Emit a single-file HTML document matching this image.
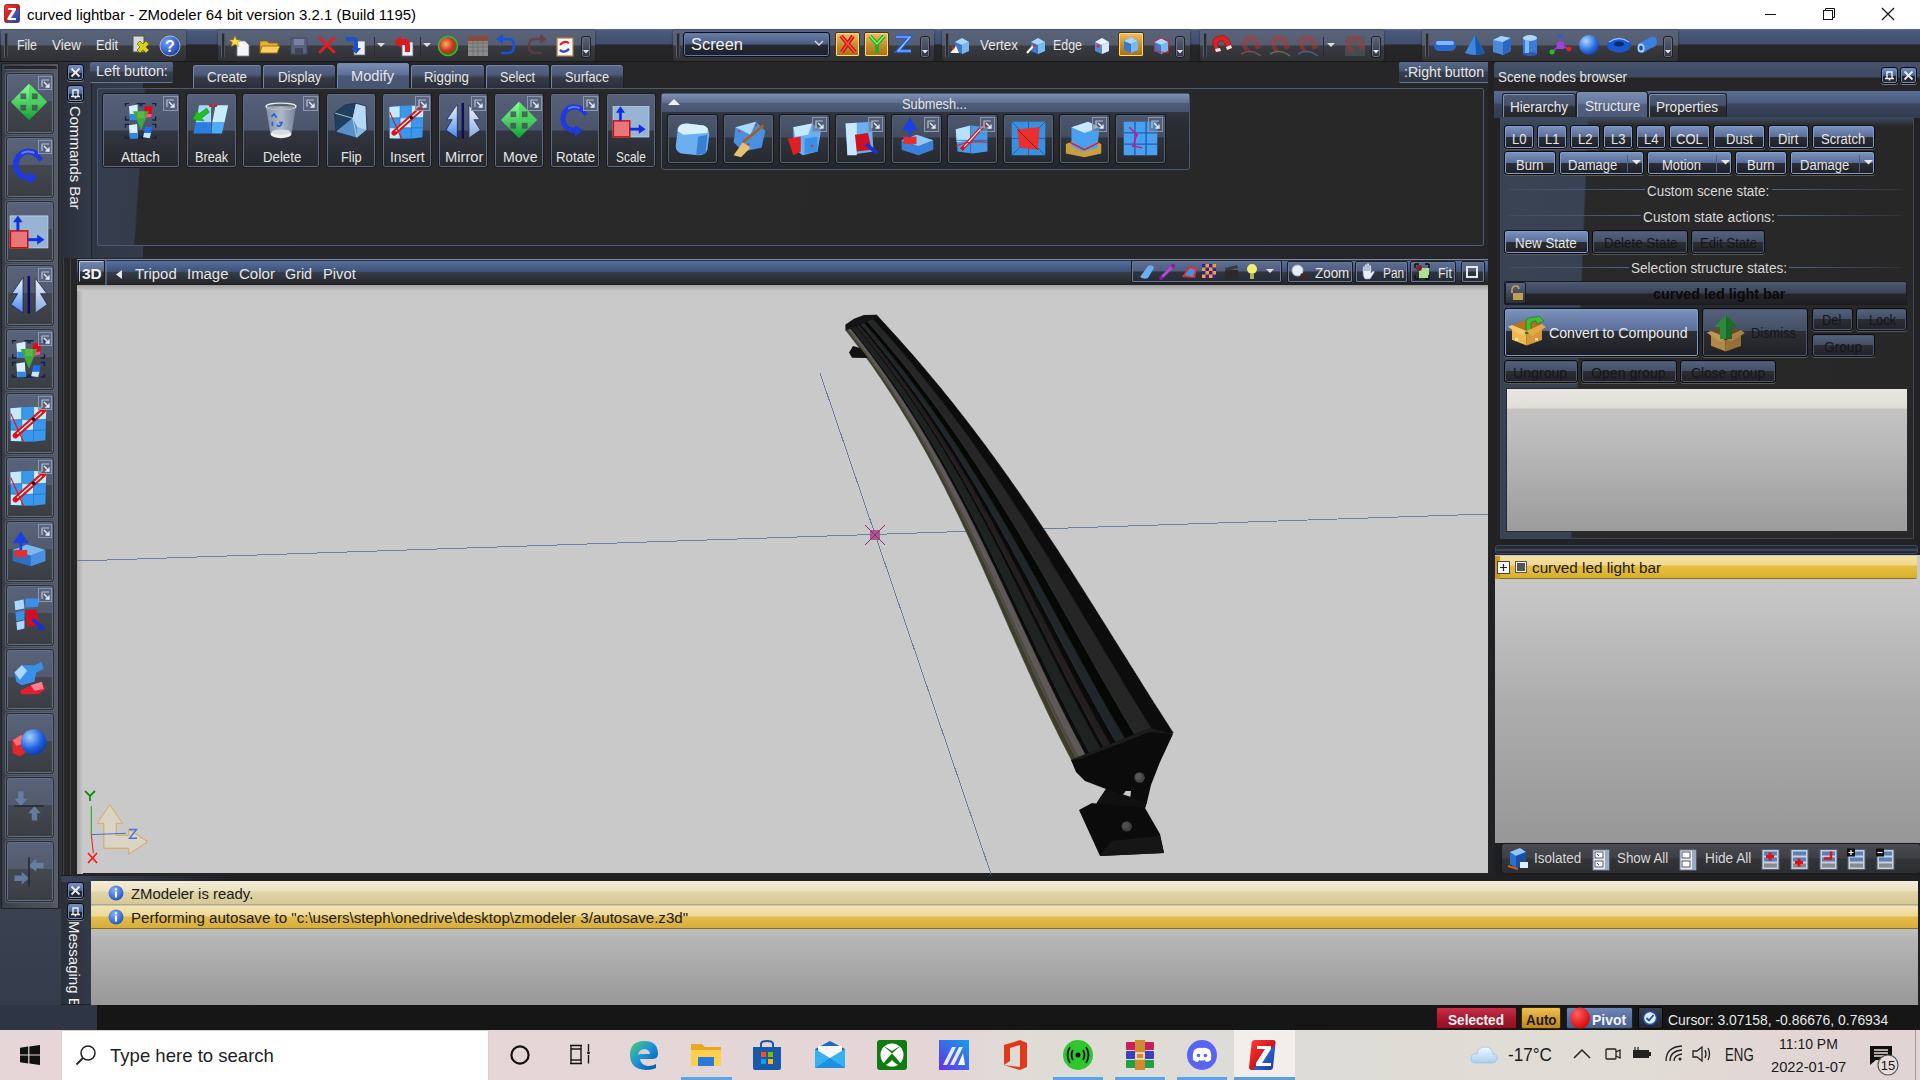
<!DOCTYPE html>
<html><head><meta charset="utf-8"><title>ZModeler</title><style>*{margin:0;padding:0;box-sizing:border-box}
html,body{width:1920px;height:1080px;overflow:hidden;background:#262627;font-family:"Liberation Sans",sans-serif}
.a{position:absolute;display:block}
.t{position:absolute;white-space:nowrap;transform-origin:0 0;font-family:"Liberation Sans",sans-serif}
svg.a{overflow:visible}</style></head><body>
<div class="a" style="left:0px;top:0px;width:1920px;height:29px;background:#fff"></div>
<svg class="a" style="left:4px;top:4px;" width="16" height="19" viewBox="0 0 16 19"><defs><linearGradient id="zg" x1="0" y1="0" x2="1" y2="1"><stop offset="0" stop-color="#ff3a3a"/><stop offset="0.55" stop-color="#d01515"/><stop offset="0.6" stop-color="#2a5fd0"/><stop offset="1" stop-color="#1a3a9a"/></linearGradient></defs><rect x="0.5" y="0.5" width="15" height="18" rx="2" fill="url(#zg)" stroke="#8a1010" stroke-width="0.8"/><path d="M4 4 H12 V6 L7 14 H12 V16 H3.5 V14 L8.5 6 H4 Z" fill="#fff"/></svg>
<div class="t" style="left:27.00px;top:7.30px;font-size:15px;line-height:15px;color:#000;transform:scaleX(0.9977);">curved lightbar - ZModeler 64 bit version 3.2.1 (Build 1195)</div>
<div class="a" style="left:1765px;top:14px;width:11px;height:1px;background:#111"></div>
<svg class="a" style="left:1822px;top:7px;" width="14" height="14" viewBox="0 0 14 14"><rect x="1.5" y="3.5" width="9" height="9" fill="none" stroke="#111"/><path d="M3.5 3.5 V1.5 H12.5 V10.5 H10.5" fill="none" stroke="#111"/></svg>
<svg class="a" style="left:1881px;top:7px;" width="14" height="14" viewBox="0 0 14 14"><path d="M1 1 L13 13 M13 1 L1 13" stroke="#111" stroke-width="1.2"/></svg>
<div class="a" style="left:0px;top:29px;width:1920px;height:33px;background:linear-gradient(#5a6b8e 0px,#4a5a7c 2px,#3f4e6c 15px,#262729 16px,#242426 33px)"></div>
<div class="a" style="left:0px;top:61px;width:1920px;height:1px;background:#1a1a1b"></div>
<div class="a" style="left:1px;top:30px;width:185px;height:31px;border-radius:2px;background:linear-gradient(#5a6478 0px,#535c70 15px,#3a3b40 16px,#303135 31px);box-shadow:0 0 2px #1e1e20"></div>
<div class="a" style="left:4px;top:33px;width:4px;height:25px;border-radius:2px;background:#262a32;border-left:1px solid #5a6070;border-right:1px solid #4a5060"></div>
<div class="a" style="left:218px;top:30px;width:377px;height:31px;border-radius:2px;background:linear-gradient(#5a6478 0px,#535c70 15px,#3a3b40 16px,#303135 31px);box-shadow:0 0 2px #1e1e20"></div>
<div class="a" style="left:221px;top:33px;width:4px;height:25px;border-radius:2px;background:#262a32;border-left:1px solid #5a6070;border-right:1px solid #4a5060"></div>
<div class="a" style="left:673px;top:30px;width:261px;height:31px;border-radius:2px;background:linear-gradient(#5a6478 0px,#535c70 15px,#3a3b40 16px,#303135 31px);box-shadow:0 0 2px #1e1e20"></div>
<div class="a" style="left:676px;top:33px;width:4px;height:25px;border-radius:2px;background:#262a32;border-left:1px solid #5a6070;border-right:1px solid #4a5060"></div>
<div class="a" style="left:942px;top:30px;width:248px;height:31px;border-radius:2px;background:linear-gradient(#5a6478 0px,#535c70 15px,#3a3b40 16px,#303135 31px);box-shadow:0 0 2px #1e1e20"></div>
<div class="a" style="left:945px;top:33px;width:4px;height:25px;border-radius:2px;background:#262a32;border-left:1px solid #5a6070;border-right:1px solid #4a5060"></div>
<div class="a" style="left:1200px;top:30px;width:184px;height:31px;border-radius:2px;background:linear-gradient(#5a6478 0px,#535c70 15px,#3a3b40 16px,#303135 31px);box-shadow:0 0 2px #1e1e20"></div>
<div class="a" style="left:1203px;top:33px;width:4px;height:25px;border-radius:2px;background:#262a32;border-left:1px solid #5a6070;border-right:1px solid #4a5060"></div>
<div class="a" style="left:1422px;top:30px;width:256px;height:31px;border-radius:2px;background:linear-gradient(#5a6478 0px,#535c70 15px,#3a3b40 16px,#303135 31px);box-shadow:0 0 2px #1e1e20"></div>
<div class="a" style="left:1425px;top:33px;width:4px;height:25px;border-radius:2px;background:#262a32;border-left:1px solid #5a6070;border-right:1px solid #4a5060"></div>
<div class="t" style="left:17.00px;top:38.15px;font-size:14px;line-height:14px;color:#e6e6e6;transform:scaleX(0.8850);">File</div>
<div class="t" style="left:52.00px;top:38.15px;font-size:14px;line-height:14px;color:#e6e6e6;transform:scaleX(0.9603);">View</div>
<div class="t" style="left:96.00px;top:38.15px;font-size:14px;line-height:14px;color:#e6e6e6;transform:scaleX(0.9129);">Edit</div>
<svg class="a" style="left:131px;top:34px;" width="22" height="22" viewBox="0 0 22 22"><rect x="2" y="2" width="11" height="16" fill="#d8d8d8" stroke="#555"/><path d="M6 10 l3 -3 l3 3 l3 -3 l3 3 l-3 3 l3 3 l-3 3 l-3 -3 l-3 3 l-3 -3 l3 -3z" fill="#d6d020" stroke="#6a6a00" stroke-width="0.8"/></svg>
<svg class="a" style="left:159px;top:35px;" width="22" height="21" viewBox="0 0 22 21"><defs><radialGradient id="hq" cx="0.35" cy="0.3" r="0.8"><stop offset="0" stop-color="#6aa0ff"/><stop offset="1" stop-color="#1a3aa0"/></radialGradient></defs><circle cx="11" cy="11" r="10" fill="url(#hq)" stroke="#c8d0e0" stroke-width="0.8"/><text x="11" y="17" font-size="16" font-weight="bold" text-anchor="middle" fill="#fff" font-family="Liberation Sans">?</text></svg>
<svg class="a" style="left:230px;top:35px;" width="22" height="22" viewBox="0 0 22 22"><path d="M7 6 H15 L19 10 V21 H7Z" fill="#f4f4f4" stroke="#7a8090" stroke-width="0.8"/><path d="M5 1 l1.5 4 4 0 -3 2.5 1 4 -3.5 -2.5 -3.5 2.5 1 -4 -3 -2.5 4 0z" fill="#ffe040" stroke="#c09000" stroke-width="0.5"/></svg>
<svg class="a" style="left:259px;top:37px;" width="22" height="18" viewBox="0 0 22 18"><path d="M1 4 H8 L10 6 H19 V16 H1Z" fill="#e8b030" stroke="#8a6010" stroke-width="0.8"/><path d="M3 9 H21 L18 16 H1Z" fill="#ffd060" stroke="#8a6010" stroke-width="0.8"/></svg>
<svg class="a" style="left:289px;top:36px;" width="20" height="20" viewBox="0 0 20 20"><rect x="2" y="2" width="16" height="16" rx="1" fill="#5a6080" stroke="#454a60"/><rect x="5" y="3" width="10" height="6" fill="#7a80a0"/><rect x="6" y="12" width="8" height="6" fill="#40455a"/></svg>
<svg class="a" style="left:317px;top:35px;" width="20" height="20" viewBox="0 0 20 20"><path d="M3 3 L17 17 M17 3 L3 17" stroke="#e02020" stroke-width="3" stroke-linecap="round"/></svg>
<svg class="a" style="left:345px;top:35px;" width="22" height="22" viewBox="0 0 22 22"><rect x="9" y="6" width="11" height="14" fill="#eef" stroke="#666" stroke-width="0.8"/><path d="M1 2 H10 L13 5 V13 H16 L11 19 L6 13 H9 V6 H1Z" fill="#1a50d0"/></svg>
<div class="a" style="left:374px;top:37px;width:1px;height:20px;background:#2a2c30"></div>
<svg class="a" style="left:377px;top:43px;" width="8" height="5" viewBox="0 0 8 5"><path d="M0 0 H8 L4 4Z" fill="#e0e0e0"/></svg>
<svg class="a" style="left:393px;top:35px;" width="22" height="22" viewBox="0 0 22 22"><rect x="9" y="7" width="11" height="14" fill="#eef" stroke="#666" stroke-width="0.8"/><path d="M1 7 L8 1 V4 H12 Q17 4 17 10 V17 H12 V10 H8 V13Z" fill="#e01818"/></svg>
<div class="a" style="left:420px;top:37px;width:1px;height:20px;background:#2a2c30"></div>
<svg class="a" style="left:423px;top:43px;" width="8" height="5" viewBox="0 0 8 5"><path d="M0 0 H8 L4 4Z" fill="#e0e0e0"/></svg>
<svg class="a" style="left:437px;top:35px;" width="22" height="22" viewBox="0 0 22 22"><defs><radialGradient id="gb" cx="0.4" cy="0.4" r="0.7"><stop offset="0" stop-color="#ffb060"/><stop offset="0.5" stop-color="#d03020"/><stop offset="1" stop-color="#108010"/></radialGradient></defs><circle cx="11" cy="11" r="10" fill="url(#gb)"/><circle cx="11" cy="11" r="9.5" fill="none" stroke="#30c030" stroke-width="1.5"/></svg>
<svg class="a" style="left:467px;top:35px;" width="22" height="22" viewBox="0 0 22 22"><rect x="1" y="1" width="20" height="20" fill="#8a8a8a"/><path d="M1 1 H21 V6 H1Z" fill="#8a4a3a"/><path d="M1 8 H21 M1 12 H21 M1 16 H21 M6 6 V21 M11 6 V21 M16 6 V21" stroke="#6a6a6a" stroke-width="0.8"/></svg>
<svg class="a" style="left:495px;top:36px;" width="22" height="20" viewBox="0 0 22 20"><path d="M8 3 H13 Q19 3 19 10 Q19 17 13 17 H6" fill="none" stroke="#1a50e0" stroke-width="2.5"/><path d="M1 3 L8 -2 V8Z" fill="#1a50e0"/></svg>
<svg class="a" style="left:526px;top:36px;" width="22" height="20" viewBox="0 0 22 20"><path d="M14 3 H9 Q3 3 3 10 Q3 17 9 17 H16" fill="none" stroke="#6a3a40" stroke-width="2.5" opacity="0.8"/><path d="M21 3 L14 -2 V8Z" fill="#6a3a40" opacity="0.8"/></svg>
<svg class="a" style="left:554px;top:35px;" width="22" height="22" viewBox="0 0 22 22"><rect x="3" y="3" width="16" height="18" fill="#f8f8f8" stroke="#b08040" stroke-width="1.2"/><path d="M6 10 Q10 5 15 8 M15 8 l-3 -1 M6 15 Q10 19 15 14" stroke="#e02020" stroke-width="2" fill="none"/><path d="M6 15 Q10 19 15 14" stroke="#2050e0" stroke-width="2" fill="none"/></svg>
<div class="a" style="left:581px;top:36px;width:10px;height:22px;border:1px solid #1d1f24;border-radius:3px;background:linear-gradient(#5a6478,#2e3340);box-shadow:inset 0 0 0 1px #6a7080"></div>
<svg class="a" style="left:583px;top:50px;" width="6" height="4" viewBox="0 0 6 4"><path d="M0 0 H6 L3 3.5Z" fill="#e8e8e8"/></svg>
<div class="a" style="left:683px;top:32px;width:147px;height:25px;border:1px solid #0e0f12;border-radius:3px;background:linear-gradient(#6a7ea8,#4b5c82 11px,#262a34 12px,#1d1f25);box-shadow:inset 0 0 0 1px #5a7ab0"></div>
<div class="t" style="left:691.00px;top:35.61px;font-size:17px;line-height:17px;color:#f2f2f2;transform:scaleX(0.9647);">Screen</div>
<svg class="a" style="left:814px;top:40px;" width="10" height="7" viewBox="0 0 10 7"><path d="M1 1 L5 5 L9 1" fill="none" stroke="#e0e0e0" stroke-width="1.3"/></svg>
<div class="a" style="left:835px;top:32px;width:25px;height:25px;border:1px solid #4a3510;border-radius:2px;background:linear-gradient(#f0c060,#c89030 50%,#a87010);box-shadow:inset 0 0 0 1px #ffd890"></div>
<svg class="a" style="left:838px;top:34px;" width="20" height="20" viewBox="0 0 20 20"><path d="M3 2 L17 18 M15 2 L4 18" stroke="#d01010" stroke-width="4"/><path d="M3 2 L17 18 M15 2 L4 18" stroke="#ff6060" stroke-width="1.2"/></svg>
<div class="a" style="left:864px;top:32px;width:25px;height:25px;border:1px solid #4a3510;border-radius:2px;background:linear-gradient(#f0c060,#c89030 50%,#a87010);box-shadow:inset 0 0 0 1px #ffd890"></div>
<svg class="a" style="left:867px;top:34px;" width="20" height="20" viewBox="0 0 20 20"><path d="M3 2 L10 10 L17 2 M10 10 V19" fill="none" stroke="#20b020" stroke-width="4"/><path d="M3 2 L10 10 L17 2" fill="none" stroke="#80ff80" stroke-width="1.2"/></svg>
<svg class="a" style="left:893px;top:34px;" width="20" height="20" viewBox="0 0 20 20"><path d="M3 3 H17 L5 17 H18" fill="none" stroke="#2060e0" stroke-width="4"/><path d="M3 3 H17 L5 17 H18" fill="none" stroke="#a0c8ff" stroke-width="1.2"/></svg>
<div class="a" style="left:920px;top:36px;width:10px;height:22px;border:1px solid #1d1f24;border-radius:3px;background:linear-gradient(#5a6478,#2e3340);box-shadow:inset 0 0 0 1px #6a7080"></div>
<svg class="a" style="left:922px;top:50px;" width="6" height="4" viewBox="0 0 6 4"><path d="M0 0 H6 L3 3.5Z" fill="#e8e8e8"/></svg>
<svg class="a" style="left:952px;top:35px;" width="20" height="20" viewBox="0 0 20 20"><path d="M3 7 L10 3 L17 7 L17 16 L10 19 L3 16Z" fill="#3a78c8"/><path d="M3 7 L10 3 L17 7 L10 10Z" fill="#a8d8ff"/><path d="M10 10 L17 7 V16 L10 19Z" fill="#7ab8f0"/></svg>
<svg class="a" style="left:950px;top:44px;" width="10" height="10" viewBox="0 0 10 10"><path d="M0 9 L6 2 L9 9Z" fill="#fff"/><circle cx="3" cy="4" r="1.5" fill="#e02020"/></svg>
<div class="t" style="left:980.00px;top:38.15px;font-size:14px;line-height:14px;color:#e6e6e6;transform:scaleX(0.9572);">Vertex</div>
<svg class="a" style="left:1028px;top:35px;" width="20" height="20" viewBox="0 0 20 20"><path d="M3 7 L10 3 L17 7 L17 16 L10 19 L3 16Z" fill="#3a78c8"/><path d="M3 7 L10 3 L17 7 L10 10Z" fill="#a8d8ff"/><path d="M10 10 L17 7 V16 L10 19Z" fill="#7ab8f0"/></svg>
<svg class="a" style="left:1026px;top:44px;" width="10" height="10" viewBox="0 0 10 10"><path d="M1 9 L8 1" stroke="#fff" stroke-width="2"/><circle cx="8" cy="1.5" r="1.5" fill="#e02020"/></svg>
<div class="t" style="left:1053.00px;top:38.15px;font-size:14px;line-height:14px;color:#e6e6e6;transform:scaleX(0.8869);">Edge</div>
<svg class="a" style="left:1092px;top:35px;" width="20" height="20" viewBox="0 0 20 20"><path d="M3 7 L10 3 L17 7 L17 16 L10 19 L3 16Z" fill="#5a88c8"/><path d="M3 7 L10 3 L17 7 L10 10Z" fill="#f0f0ff"/><path d="M10 10 L17 7 V16 L10 19Z" fill="#d8e8f8"/></svg>
<svg class="a" style="left:1094px;top:42px;" width="8" height="8" viewBox="0 0 8 8"><circle cx="4" cy="4" r="1.5" fill="#e02020"/></svg>
<div class="a" style="left:1118px;top:32px;width:26px;height:25px;border:1px solid #4a3510;border-radius:2px;background:linear-gradient(#f0c060,#c89030 50%,#a87010);box-shadow:inset 0 0 0 1px #ffd890"></div>
<svg class="a" style="left:1121px;top:34px;" width="21" height="21" viewBox="0 0 21 21"><path d="M3 7 L10 3 L17 7 L17 16 L10 19 L3 16Z" fill="#3a78c8"/><path d="M3 7 L10 3 L17 7 L10 10Z" fill="#a8d8ff"/><path d="M10 10 L17 7 V16 L10 19Z" fill="#7ab8f0"/></svg>
<svg class="a" style="left:1151px;top:35px;" width="22" height="22" viewBox="0 0 22 22"><path d="M3 7 L10 3 L17 7 L17 16 L10 19 L3 16Z" fill="#3a78c8"/><path d="M3 7 L10 3 L17 7 L10 10Z" fill="#a8d8ff"/><path d="M10 10 L17 7 V16 L10 19Z" fill="#7ab8f0"/></svg>
<svg class="a" style="left:1151px;top:35px;" width="22" height="22" viewBox="0 0 22 22"><path d="M3 7 L10 3 L19 7 L17 18 L4 16Z" fill="none" stroke="#e02020" stroke-width="1"/></svg>
<div class="a" style="left:1175px;top:36px;width:10px;height:22px;border:1px solid #1d1f24;border-radius:3px;background:linear-gradient(#5a6478,#2e3340);box-shadow:inset 0 0 0 1px #6a7080"></div>
<svg class="a" style="left:1177px;top:50px;" width="6" height="4" viewBox="0 0 6 4"><path d="M0 0 H6 L3 3.5Z" fill="#e8e8e8"/></svg>
<svg class="a" style="left:1210px;top:34px;" width="24" height="24" viewBox="0 0 24 24"><path d="M6 18 L3 11 Q1 4 9 2 Q17 0 20 8 L22 14 L17 16 L15 10 Q14 6 10 7 Q6 8 8 12 L11 17Z" fill="#e02020" stroke="#801010" stroke-width="0.6"/><path d="M6 18 L11 17 L10 14 L5 15Z M22 14 L17 16 L16 13 L21 11Z" fill="#e8e8e8"/></svg>
<svg class="a" style="left:1239px;top:34px;" width="24" height="24" viewBox="0 0 24 24"><g opacity="0.45"><path d="M6 18 L3 11 Q1 4 9 2 Q17 0 20 8 L22 14 L17 16 L15 10 Q14 6 10 7 Q6 8 8 12 L11 17Z" fill="#c03030"/></g><path d="M2 20 Q12 14 22 22" stroke="#7a5050" stroke-width="1.5" fill="none"/></svg>
<svg class="a" style="left:1268px;top:34px;" width="24" height="24" viewBox="0 0 24 24"><g opacity="0.45"><path d="M6 18 L3 11 Q1 4 9 2 Q17 0 20 8 L22 14 L17 16 L15 10 Q14 6 10 7 Q6 8 8 12 L11 17Z" fill="#c03030"/></g><path d="M2 20 Q12 14 22 22" stroke="#607050" stroke-width="1.5" fill="none"/></svg>
<svg class="a" style="left:1296px;top:34px;" width="24" height="24" viewBox="0 0 24 24"><g opacity="0.45"><path d="M6 18 L3 11 Q1 4 9 2 Q17 0 20 8 L22 14 L17 16 L15 10 Q14 6 10 7 Q6 8 8 12 L11 17Z" fill="#c03030"/></g><path d="M2 20 Q12 14 22 22" stroke="#506080" stroke-width="1.5" fill="none"/></svg>
<div class="a" style="left:1323px;top:37px;width:1px;height:20px;background:#2a2c30"></div>
<svg class="a" style="left:1327px;top:43px;" width="8" height="5" viewBox="0 0 8 5"><path d="M0 0 H8 L4 4Z" fill="#e0e0e0"/></svg>
<svg class="a" style="left:1343px;top:34px;" width="24" height="24" viewBox="0 0 24 24"><rect x="2" y="2" width="20" height="20" fill="#55575c" opacity="0.6"/><g opacity="0.4"><path d="M6 18 L3 11 Q1 4 9 2 Q17 0 20 8 L22 14 L17 16 L15 10 Q14 6 10 7 Q6 8 8 12 L11 17Z" fill="#c03030"/></g></svg>
<div class="a" style="left:1371px;top:36px;width:10px;height:22px;border:1px solid #1d1f24;border-radius:3px;background:linear-gradient(#5a6478,#2e3340);box-shadow:inset 0 0 0 1px #6a7080"></div>
<svg class="a" style="left:1373px;top:50px;" width="6" height="4" viewBox="0 0 6 4"><path d="M0 0 H6 L3 3.5Z" fill="#e8e8e8"/></svg>
<svg class="a" style="left:1433px;top:37px;" width="24" height="16" viewBox="0 0 24 16"><rect x="1" y="3" width="22" height="11" rx="5.5" fill="#2a68d0"/><rect x="3" y="4" width="18" height="4" rx="2" fill="#80b8ff"/></svg>
<svg class="a" style="left:1464px;top:34px;" width="22" height="22" viewBox="0 0 22 22"><path d="M11 1 L21 19 Q11 23 1 19Z" fill="#3a88e0"/><path d="M11 1 L21 19 Q16 21 12 21Z" fill="#1a58b0"/></svg>
<svg class="a" style="left:1491px;top:34px;" width="22" height="22" viewBox="0 0 22 22"><path d="M2 6 L10 2 L20 4 L20 17 L12 21 L2 18Z" fill="#4a8ad8"/><path d="M2 6 L10 2 L20 4 L12 8Z" fill="#a8d0ff"/><path d="M12 8 L20 4 V17 L12 21Z" fill="#2a68c0"/></svg>
<svg class="a" style="left:1520px;top:34px;" width="20" height="22" viewBox="0 0 20 22"><rect x="3" y="4" width="14" height="16" fill="#3a7ad8"/><ellipse cx="10" cy="4" rx="7" ry="3" fill="#b0d8ff"/><ellipse cx="10" cy="20" rx="7" ry="2" fill="#2a5ab0"/><rect x="5" y="6" width="4" height="13" fill="#80b8ff"/></svg>
<svg class="a" style="left:1549px;top:34px;" width="22" height="22" viewBox="0 0 22 22"><path d="M11 11 V2 M11 11 L3 18 M11 11 L20 15" stroke="#8a40c0" stroke-width="2"/><rect x="8" y="8" width="7" height="7" fill="#a040e0"/><circle cx="11" cy="2" r="2" fill="#2060e0"/><circle cx="3" cy="18" r="2.5" fill="#20c020"/><circle cx="20" cy="15" r="2.5" fill="#e02020"/></svg>
<svg class="a" style="left:1578px;top:34px;" width="22" height="22" viewBox="0 0 22 22"><defs><radialGradient id="sph" cx="0.35" cy="0.3" r="0.8"><stop offset="0" stop-color="#b0d8ff"/><stop offset="0.6" stop-color="#2a70e0"/><stop offset="1" stop-color="#1a30a0"/></radialGradient></defs><circle cx="11" cy="11" r="10" fill="url(#sph)"/></svg>
<svg class="a" style="left:1606px;top:36px;" width="26" height="18" viewBox="0 0 26 18"><ellipse cx="13" cy="9" rx="12" ry="7.5" fill="#1a58d0"/><ellipse cx="13" cy="8" rx="5" ry="2.5" fill="#0a2a70"/><path d="M3 6 Q13 -1 23 6" stroke="#90c0ff" stroke-width="1.5" fill="none"/></svg>
<svg class="a" style="left:1635px;top:34px;" width="24" height="22" viewBox="0 0 24 22"><path d="M3 10 L16 3 Q22 2 22 8 Q22 13 16 14 L8 19 Q3 19 3 14Z" fill="#3a80e0"/><ellipse cx="6" cy="14" rx="3.5" ry="4.5" fill="#a8d0ff"/><ellipse cx="6" cy="14" rx="1.8" ry="2.5" fill="#1a50a0"/></svg>
<div class="a" style="left:1663px;top:36px;width:10px;height:22px;border:1px solid #1d1f24;border-radius:3px;background:linear-gradient(#5a6478,#2e3340);box-shadow:inset 0 0 0 1px #6a7080"></div>
<svg class="a" style="left:1665px;top:50px;" width="6" height="4" viewBox="0 0 6 4"><path d="M0 0 H6 L3 3.5Z" fill="#e8e8e8"/></svg>
<div class="a" style="left:0px;top:62px;width:62px;height:848px;background:#2c3039"></div>
<div class="a" style="left:1px;top:63px;width:58px;height:846px;background:linear-gradient(90deg,#3a3e46,#474b54 40%,#4c5059 85%,#5a5e68);border:1px solid #1f2228;border-radius:2px"></div>
<div class="a" style="left:4px;top:66px;width:53px;height:4px;background:#23262c;border-bottom:1px solid #5a6070;border-radius:2px"></div>
<div class="a" style="left:6px;top:73px;width:48px;height:61px;border:1px solid #2a2d33; border-radius:3px;background:linear-gradient(#5a6378,#525a6c 27px,#43474f 27px,#3a3d44);box-shadow:inset 0 0 0 1px #5e6e8e,0 0 0 1px #5c6069"></div>
<svg class="a" style="left:8px;top:81px;" width="42" height="42" viewBox="0 0 44 44"><defs><linearGradient id="mv" x1="0" y1="0" x2="0" y2="1"><stop offset="0" stop-color="#90ffa0"/><stop offset="1" stop-color="#10a030"/></linearGradient></defs><path d="M22 3 L41 22 L22 41 L3 22Z" fill="url(#mv)"/><path d="M22 3 L41 22 L22 22Z" fill="#40d050" opacity="0.6"/><rect x="13" y="13" width="6" height="6" fill="#3a4050" opacity="0.7"/><rect x="25" y="13" width="6" height="6" fill="#3a4050" opacity="0.7"/><rect x="13" y="25" width="6" height="6" fill="#3a4050" opacity="0.7"/><rect x="25" y="25" width="6" height="6" fill="#3a4050" opacity="0.7"/></svg>
<svg class="a" style="left:38px;top:76px;" width="14" height="14" viewBox="0 0 14 14"><rect x="0.5" y="0.5" width="13" height="13" fill="#5a6580" fill-opacity="0.5" stroke="#8a96b0"/><path d="M4 11 V4 H11" fill="none" stroke="#b8c2d8" stroke-width="1.2"/><path d="M6 6 L11 11 M11 7.5 V11 H7.5" fill="none" stroke="#e8eef8" stroke-width="1.3"/></svg>
<div class="a" style="left:6px;top:137px;width:48px;height:61px;border:1px solid #2a2d33; border-radius:3px;background:linear-gradient(#5a6378,#525a6c 27px,#43474f 27px,#3a3d44);box-shadow:inset 0 0 0 1px #5e6e8e,0 0 0 1px #5c6069"></div>
<svg class="a" style="left:8px;top:145px;" width="42" height="42" viewBox="0 0 44 44"><path d="M30 10 Q22 4 14 9 Q6 15 9 26 Q13 35 24 34" fill="none" stroke="#2038e0" stroke-width="6"/><path d="M30 10 Q22 4 14 9" fill="none" stroke="#6080ff" stroke-width="2"/><path d="M22 28 L31 34 L22 41Z" fill="#2038e0"/><path d="M28 8 L35 16" stroke="#2038e0" stroke-width="5"/></svg>
<svg class="a" style="left:38px;top:140px;" width="14" height="14" viewBox="0 0 14 14"><rect x="0.5" y="0.5" width="13" height="13" fill="#5a6580" fill-opacity="0.5" stroke="#8a96b0"/><path d="M4 11 V4 H11" fill="none" stroke="#b8c2d8" stroke-width="1.2"/><path d="M6 6 L11 11 M11 7.5 V11 H7.5" fill="none" stroke="#e8eef8" stroke-width="1.3"/></svg>
<div class="a" style="left:6px;top:201px;width:48px;height:61px;border:1px solid #2a2d33; border-radius:3px;background:linear-gradient(#5a6378,#525a6c 27px,#43474f 27px,#3a3d44);box-shadow:inset 0 0 0 1px #5e6e8e,0 0 0 1px #5c6069"></div>
<svg class="a" style="left:9px;top:210px;" width="40" height="40" viewBox="0 0 44 44"><rect x="1.2" y="6.5" width="41.6" height="35.2" fill="#98b4d4" stroke="#c8dcf0" stroke-width="0.8"/><rect x="1.6" y="23" width="19" height="18.5" fill="#e87878" stroke="#d00808" stroke-width="1.6"/><path d="M9.8 23 V12" stroke="#1030e0" stroke-width="3.2"/><path d="M4.5 13.5 L9.8 6 L15 13.5Z" fill="#1030e0"/><path d="M20.5 32.6 H33" stroke="#1030e0" stroke-width="3.2"/><path d="M31 27 L39 32.6 L31 38Z" fill="#1030e0"/></svg>
<div class="a" style="left:6px;top:265px;width:48px;height:61px;border:1px solid #2a2d33; border-radius:3px;background:linear-gradient(#5a6378,#525a6c 27px,#43474f 27px,#3a3d44);box-shadow:inset 0 0 0 1px #5e6e8e,0 0 0 1px #5c6069"></div>
<svg class="a" style="left:9px;top:274px;" width="40" height="40" viewBox="0 0 44 44"><defs><linearGradient id="mrl" x1="0" y1="0" x2="0" y2="1"><stop offset="0" stop-color="#eef8ff"/><stop offset="1" stop-color="#4a88f0"/></linearGradient><linearGradient id="mrr" x1="0" y1="0" x2="0" y2="1"><stop offset="0" stop-color="#f0f4ff"/><stop offset="1" stop-color="#8aa8e0"/></linearGradient></defs><path d="M15.4 3.9 L3.1 21.6 L9.5 21.6 L2.3 33.6 L15.4 42.8Z" fill="url(#mrl)" stroke="#102050" stroke-width="0.8"/><path d="M28.9 4.6 L41.7 21.6 L34.7 21.6 L42 33.6 L28.9 42.8Z" fill="url(#mrr)" stroke="#202a50" stroke-width="0.8"/><rect x="20.4" y="2.3" width="2.8" height="41.3" fill="#0a0e60"/></svg>
<svg class="a" style="left:38px;top:268px;" width="14" height="14" viewBox="0 0 14 14"><rect x="0.5" y="0.5" width="13" height="13" fill="#5a6580" fill-opacity="0.5" stroke="#8a96b0"/><path d="M4 11 V4 H11" fill="none" stroke="#b8c2d8" stroke-width="1.2"/><path d="M6 6 L11 11 M11 7.5 V11 H7.5" fill="none" stroke="#e8eef8" stroke-width="1.3"/></svg>
<div class="a" style="left:6px;top:329px;width:48px;height:61px;border:1px solid #2a2d33; border-radius:3px;background:linear-gradient(#5a6378,#525a6c 27px,#43474f 27px,#3a3d44);box-shadow:inset 0 0 0 1px #5e6e8e,0 0 0 1px #5c6069"></div>
<svg class="a" style="left:9px;top:338px;" width="40" height="40" viewBox="0 0 44 44"><g stroke="#10204a" stroke-width="1.6" fill="none"><path d="M4 6 V3 H8 M17 3 H21 V6 M23 6 V3 H27 M35 3 H39 V6 M4 18 V22 H8 M35 22 H39 V18 M4 31 V27 H8 M35 27 H39 V31 M4 40 V43 H8 M17 43 H21 V40 M23 40 V43 H27 M35 43 H39 V40"/></g><path d="M8 6 L18 4 L18.5 22 L9.5 22Z" fill="#d8f0ff"/><path d="M9 15 H18.5 V22 H9.5Z" fill="#2a88e8"/><path d="M26 6 H35.6 L34 18.5 L26 19.7Z" fill="#e00818"/><path d="M26 15 H34.5 L34 18.5 L26 19.7Z" fill="#ff5090"/><path d="M12.7 12 L31 12 L22 34Z" fill="#40a838"/><path d="M18 12 H26 V20 H18Z" fill="#58b848"/><path d="M8 28 L17.4 26.6 L18.5 43 L9.3 43Z" fill="#d8f0ff"/><path d="M9 37 H18.3 L18.5 43 L9.3 43Z" fill="#2a88e8"/><path d="M26.6 30 H34.7 L33.6 37 H25.5Z" fill="#1a70f0"/><path d="M25.5 37 H33.6 L32 43 L24.5 42Z" fill="#c8e8ff"/></svg>
<svg class="a" style="left:38px;top:332px;" width="14" height="14" viewBox="0 0 14 14"><rect x="0.5" y="0.5" width="13" height="13" fill="#5a6580" fill-opacity="0.5" stroke="#8a96b0"/><path d="M4 11 V4 H11" fill="none" stroke="#b8c2d8" stroke-width="1.2"/><path d="M6 6 L11 11 M11 7.5 V11 H7.5" fill="none" stroke="#e8eef8" stroke-width="1.3"/></svg>
<div class="a" style="left:6px;top:393px;width:48px;height:61px;border:1px solid #2a2d33; border-radius:3px;background:linear-gradient(#5a6378,#525a6c 27px,#43474f 27px,#3a3d44);box-shadow:inset 0 0 0 1px #5e6e8e,0 0 0 1px #5c6069"></div>
<svg class="a" style="left:9px;top:402px;" width="40" height="40" viewBox="0 0 44 44"><path d="M1.6 7 Q20 4 41 6 L40 42 Q20 45 2 43Z" fill="#3a98ec"/><path d="M1.6 7 L14 6 L14 19 L2 20Z M27 5.5 L41 6 L40.5 19 L27 19.5Z M14 19 L27 19.5 L27 31 L14 31Z M2 31 L14 31 L14 43 L2 43Z" fill="#c8e8ff"/><path d="M14 6 V43 M27 5.5 V43 M2 19.5 H41 M2 31 H40.5" stroke="#1a68c0" stroke-width="0.7"/><path d="M7 37 L38 9" stroke="#e01010" stroke-width="6" stroke-linecap="round"/><path d="M9 35 L36 11" stroke="#f8f8f8" stroke-width="1.6"/><circle cx="27" cy="19" r="2" fill="#111"/><path d="M2 13 L16 44" stroke="#e01010" stroke-width="1.2"/></svg>
<svg class="a" style="left:38px;top:396px;" width="14" height="14" viewBox="0 0 14 14"><rect x="0.5" y="0.5" width="13" height="13" fill="#5a6580" fill-opacity="0.5" stroke="#8a96b0"/><path d="M4 11 V4 H11" fill="none" stroke="#b8c2d8" stroke-width="1.2"/><path d="M6 6 L11 11 M11 7.5 V11 H7.5" fill="none" stroke="#e8eef8" stroke-width="1.3"/></svg>
<div class="a" style="left:6px;top:457px;width:48px;height:61px;border:1px solid #2a2d33; border-radius:3px;background:linear-gradient(#5a6378,#525a6c 27px,#43474f 27px,#3a3d44);box-shadow:inset 0 0 0 1px #5e6e8e,0 0 0 1px #5c6069"></div>
<svg class="a" style="left:9px;top:466px;" width="40" height="40" viewBox="0 0 44 44"><path d="M1.6 7 Q20 4 41 6 L40 42 Q20 45 2 43Z" fill="#3a98ec"/><path d="M1.6 7 L14 6 L14 19 L2 20Z M27 5.5 L41 6 L40.5 19 L27 19.5Z M14 19 L27 19.5 L27 31 L14 31Z M2 31 L14 31 L14 43 L2 43Z" fill="#c8e8ff"/><path d="M14 6 V43 M27 5.5 V43 M2 19.5 H41 M2 31 H40.5" stroke="#1a68c0" stroke-width="0.7"/><path d="M7 37 L38 9" stroke="#e01010" stroke-width="6" stroke-linecap="round"/><path d="M9 35 L36 11" stroke="#f8f8f8" stroke-width="1.6"/><circle cx="27" cy="19" r="2" fill="#111"/><path d="M2 13 L16 44" stroke="#e01010" stroke-width="1.2"/></svg>
<svg class="a" style="left:38px;top:460px;" width="14" height="14" viewBox="0 0 14 14"><rect x="0.5" y="0.5" width="13" height="13" fill="#5a6580" fill-opacity="0.5" stroke="#8a96b0"/><path d="M4 11 V4 H11" fill="none" stroke="#b8c2d8" stroke-width="1.2"/><path d="M6 6 L11 11 M11 7.5 V11 H7.5" fill="none" stroke="#e8eef8" stroke-width="1.3"/></svg>
<div class="a" style="left:6px;top:521px;width:48px;height:61px;border:1px solid #2a2d33; border-radius:3px;background:linear-gradient(#5a6378,#525a6c 27px,#43474f 27px,#3a3d44);box-shadow:inset 0 0 0 1px #5e6e8e,0 0 0 1px #5c6069"></div>
<svg class="a" style="left:9px;top:530px;" width="40" height="40" viewBox="0 0 44 44"><path d="M4 22 L20 16 L40 22 L40 34 L24 40 L4 34Z" fill="#2a70c8"/><path d="M4 22 L20 16 L40 22 L24 28Z" fill="#7ab8f0"/><path d="M24 28 L40 22 V34 L24 40Z" fill="#4a90e0"/><rect x="6" y="22" width="14" height="8" fill="#e03030"/><path d="M13 22 V8 M7 13 L13 4 L19 13Z" stroke="#1a40e0" stroke-width="3" fill="#1a40e0"/></svg>
<svg class="a" style="left:38px;top:524px;" width="14" height="14" viewBox="0 0 14 14"><rect x="0.5" y="0.5" width="13" height="13" fill="#5a6580" fill-opacity="0.5" stroke="#8a96b0"/><path d="M4 11 V4 H11" fill="none" stroke="#b8c2d8" stroke-width="1.2"/><path d="M6 6 L11 11 M11 7.5 V11 H7.5" fill="none" stroke="#e8eef8" stroke-width="1.3"/></svg>
<div class="a" style="left:6px;top:585px;width:48px;height:61px;border:1px solid #2a2d33; border-radius:3px;background:linear-gradient(#5a6378,#525a6c 27px,#43474f 27px,#3a3d44);box-shadow:inset 0 0 0 1px #5e6e8e,0 0 0 1px #5c6069"></div>
<svg class="a" style="left:9px;top:594px;" width="40" height="40" viewBox="0 0 44 44"><path d="M6 8 L16 6 L17 16 L7 18Z" fill="#a8d8ff"/><path d="M18 5 L34 5 L32 14 L18 15Z" fill="#3a90e8"/><path d="M7 20 L17 18 L17 28 L8 30Z" fill="#3a90e8"/><path d="M8 31 L17 29 L17 38 L9 40Z" fill="#a8d8ff"/><path d="M18 18 L30 17 L34 34 L20 36Z" fill="#d01020"/><path d="M26 28 L38 38" stroke="#1a30d0" stroke-width="4"/><path d="M34 32 L40 40 L31 39Z" fill="#1a30d0"/></svg>
<svg class="a" style="left:38px;top:588px;" width="14" height="14" viewBox="0 0 14 14"><rect x="0.5" y="0.5" width="13" height="13" fill="#5a6580" fill-opacity="0.5" stroke="#8a96b0"/><path d="M4 11 V4 H11" fill="none" stroke="#b8c2d8" stroke-width="1.2"/><path d="M6 6 L11 11 M11 7.5 V11 H7.5" fill="none" stroke="#e8eef8" stroke-width="1.3"/></svg>
<div class="a" style="left:6px;top:649px;width:48px;height:61px;border:1px solid #2a2d33; border-radius:3px;background:linear-gradient(#5a6378,#525a6c 27px,#43474f 27px,#3a3d44);box-shadow:inset 0 0 0 1px #5e6e8e,0 0 0 1px #5c6069"></div>
<svg class="a" style="left:9px;top:658px;" width="40" height="40" viewBox="0 0 44 44"><path d="M6 16 L14 8 L28 8 L36 4 L38 12 L30 16 L28 26 L14 30 L8 26Z" fill="#3a90e8"/><path d="M6 16 L14 8 L20 14 L12 24Z" fill="#a8d8ff"/><path d="M12 36 L24 30 L36 26 L40 34 L32 40 L14 40Z" fill="#e02030"/><path d="M24 30 L36 26 L38 34 L28 36Z" fill="#ff8090"/></svg>
<div class="a" style="left:6px;top:713px;width:48px;height:61px;border:1px solid #2a2d33; border-radius:3px;background:linear-gradient(#5a6378,#525a6c 27px,#43474f 27px,#3a3d44);box-shadow:inset 0 0 0 1px #5e6e8e,0 0 0 1px #5c6069"></div>
<svg class="a" style="left:9px;top:722px;" width="40" height="40" viewBox="0 0 44 44"><defs><radialGradient id="sp2" cx="0.35" cy="0.3" r="0.8"><stop offset="0" stop-color="#a8d0ff"/><stop offset="0.6" stop-color="#1a60e0"/><stop offset="1" stop-color="#1030a0"/></radialGradient></defs><path d="M4 20 L14 14 L22 18 L20 32 L12 38 L4 34Z" fill="#e02828"/><path d="M4 20 L14 14 L16 24 L8 26Z" fill="#ff6a6a"/><circle cx="27" cy="22" r="14" fill="url(#sp2)"/></svg>
<div class="a" style="left:6px;top:777px;width:48px;height:61px;border:1px solid #2a2d33; border-radius:3px;background:linear-gradient(#5a6378,#525a6c 27px,#43474f 27px,#3a3d44);box-shadow:inset 0 0 0 1px #5e6e8e,0 0 0 1px #5c6069"></div>
<svg class="a" style="left:9px;top:786px;" width="40" height="40" viewBox="0 0 44 44"><g fill="#6a82a8" opacity="0.9"><path d="M10 6 H16 V14 H20 L13 22 L6 14 H10Z"/><path d="M25 38 H31 V30 H35 L28 22 L21 30 H25Z"/></g><path d="M6 22 H38" stroke="#2a2e38" stroke-width="2"/></svg>
<div class="a" style="left:6px;top:841px;width:48px;height:61px;border:1px solid #2a2d33; border-radius:3px;background:linear-gradient(#5a6378,#525a6c 27px,#43474f 27px,#3a3d44);box-shadow:inset 0 0 0 1px #5e6e8e,0 0 0 1px #5c6069"></div>
<svg class="a" style="left:9px;top:850px;" width="40" height="40" viewBox="0 0 44 44"><g fill="#6a82a8" opacity="0.9"><path d="M6 28 V34 H14 V38 L22 31 L14 24 V28Z"/><path d="M38 14 V20 H30 V24 L22 17 L30 10 V14Z"/></g><path d="M22 8 V40" stroke="#2a2e38" stroke-width="2"/></svg>
<div class="a" style="left:61px;top:62px;width:31px;height:196px;background:linear-gradient(90deg,#2a2f3a,#333a48);border-right:1px solid #1e2128"></div>
<div class="a" style="left:67px;top:64px;width:17px;height:17px;border:1px solid #0c0c0e;border-radius:3px;background:linear-gradient(#7a94c8,#4a6090 50%,#1e2330 51%,#272d3a);box-shadow:inset 0 0 0 1px #6f8cc0,0 1px 0 #7a7a7a"></div>
<svg class="a" style="left:70px;top:67px;" width="11" height="11" viewBox="0 0 11 11"><path d="M1.5 1.5 L9.5 9.5 M9.5 1.5 L1.5 9.5" stroke="#eee" stroke-width="1.8"/></svg>
<div class="a" style="left:67px;top:85px;width:17px;height:17px;border:1px solid #0c0c0e;border-radius:3px;background:linear-gradient(#7a94c8,#4a6090 50%,#1e2330 51%,#272d3a);box-shadow:inset 0 0 0 1px #6f8cc0,0 1px 0 #7a7a7a"></div>
<svg class="a" style="left:70px;top:88px;" width="11" height="11" viewBox="0 0 11 11"><path d="M3.0 8.5 V2 H8.0 V8.5" fill="none" stroke="#f0f0f0" stroke-width="1.4"/><path d="M1.0 8.5 H10.0 M5.5 8.5 V10.5" stroke="#f0f0f0" stroke-width="1.6"/></svg>
<div class="t" style="left:68px;top:106px;font-size:15px;line-height:15px;color:#f0f0f0;transform-origin:0 0;transform:translate(15px,0) rotate(90deg) scaleX(0.994)">Commands Bar</div>
<div class="a" style="left:92px;top:62px;width:1403px;height:196px;background:#262628"></div>
<div class="a" style="left:92px;top:62px;width:51px;height:196px;background:linear-gradient(90deg,#2f3644,#343c4c)"></div>
<div class="a" style="left:90px;top:62px;width:83px;height:21px;border-radius:2px;background:linear-gradient(#5a6a8a,#46536e 45%,#353d4e 50%,#2e3442);border-bottom:1px solid #6a7a98"></div>
<div class="t" style="left:95.50px;top:64.45px;font-size:14px;line-height:14px;color:#e6e6e6;transform:scaleX(1.0257);">Left button:</div>
<div class="a" style="left:192px;top:64px;width:70px;height:25px;border:1px solid #1e2026;border-bottom:none;border-radius:3px 3px 0 0;background:linear-gradient(#5a6888,#4c5a78 40%,#343a48 55%,#2a2e38);box-shadow:inset 1px 1px 0 #7384a8"></div>
<div class="t" style="left:207.00px;top:70.15px;font-size:14px;line-height:14px;color:#e6e6e6;transform:scaleX(0.9524);">Create</div>
<div class="a" style="left:262px;top:64px;width:74px;height:25px;border:1px solid #1e2026;border-bottom:none;border-radius:3px 3px 0 0;background:linear-gradient(#5a6888,#4c5a78 40%,#343a48 55%,#2a2e38);box-shadow:inset 1px 1px 0 #7384a8"></div>
<div class="t" style="left:277.50px;top:70.15px;font-size:14px;line-height:14px;color:#e6e6e6;transform:scaleX(0.9477);">Display</div>
<div class="a" style="left:336px;top:62px;width:74px;height:27px;border:1px solid #1e2026;border-bottom:none;border-radius:3px 3px 0 0;background:linear-gradient(#7d8fb4,#5d6f94 45%,#4a5878 50%,#48556f);box-shadow:inset 1px 1px 0 #7384a8"></div>
<div class="t" style="left:351.00px;top:69.15px;font-size:14px;line-height:14px;color:#e6e6e6;transform:scaleX(1.0437);">Modify</div>
<div class="a" style="left:410px;top:64px;width:75px;height:25px;border:1px solid #1e2026;border-bottom:none;border-radius:3px 3px 0 0;background:linear-gradient(#5a6888,#4c5a78 40%,#343a48 55%,#2a2e38);box-shadow:inset 1px 1px 0 #7384a8"></div>
<div class="t" style="left:424.00px;top:70.15px;font-size:14px;line-height:14px;color:#e6e6e6;transform:scaleX(0.9474);">Rigging</div>
<div class="a" style="left:485px;top:64px;width:65px;height:25px;border:1px solid #1e2026;border-bottom:none;border-radius:3px 3px 0 0;background:linear-gradient(#5a6888,#4c5a78 40%,#343a48 55%,#2a2e38);box-shadow:inset 1px 1px 0 #7384a8"></div>
<div class="t" style="left:500.00px;top:70.15px;font-size:14px;line-height:14px;color:#e6e6e6;transform:scaleX(0.8997);">Select</div>
<div class="a" style="left:550px;top:64px;width:74px;height:25px;border:1px solid #1e2026;border-bottom:none;border-radius:3px 3px 0 0;background:linear-gradient(#5a6888,#4c5a78 40%,#343a48 55%,#2a2e38);box-shadow:inset 1px 1px 0 #7384a8"></div>
<div class="t" style="left:565.00px;top:70.15px;font-size:14px;line-height:14px;color:#e6e6e6;transform:scaleX(0.9129);">Surface</div>
<div class="a" style="left:97px;top:88px;width:1387px;height:158px;border:1px solid #4a5a78;border-radius:2px;background:linear-gradient(94deg,#363e4e 0px,#343c4b 46px,#292929 48px,#282828)"></div>
<div class="a" style="left:102px;top:93px;width:78px;height:75px;border:1px solid #1a1c20;border-radius:3px;background:linear-gradient(#56617a,#4a546a 36px,#323640 37px,#26282d);box-shadow:inset 0 0 0 1px #5d6a84"></div>
<svg class="a" style="left:122px;top:101px;" width="38" height="38" viewBox="0 0 44 44"><g stroke="#10204a" stroke-width="1.6" fill="none"><path d="M4 6 V3 H8 M17 3 H21 V6 M23 6 V3 H27 M35 3 H39 V6 M4 18 V22 H8 M35 22 H39 V18 M4 31 V27 H8 M35 27 H39 V31 M4 40 V43 H8 M17 43 H21 V40 M23 40 V43 H27 M35 43 H39 V40"/></g><path d="M8 6 L18 4 L18.5 22 L9.5 22Z" fill="#d8f0ff"/><path d="M9 15 H18.5 V22 H9.5Z" fill="#2a88e8"/><path d="M26 6 H35.6 L34 18.5 L26 19.7Z" fill="#e00818"/><path d="M26 15 H34.5 L34 18.5 L26 19.7Z" fill="#ff5090"/><path d="M12.7 12 L31 12 L22 34Z" fill="#40a838"/><path d="M18 12 H26 V20 H18Z" fill="#58b848"/><path d="M8 28 L17.4 26.6 L18.5 43 L9.3 43Z" fill="#d8f0ff"/><path d="M9 37 H18.3 L18.5 43 L9.3 43Z" fill="#2a88e8"/><path d="M26.6 30 H34.7 L33.6 37 H25.5Z" fill="#1a70f0"/><path d="M25.5 37 H33.6 L32 43 L24.5 42Z" fill="#c8e8ff"/></svg>
<svg class="a" style="left:163px;top:96px;" width="15" height="15" viewBox="0 0 15 15"><rect x="0.5" y="0.5" width="14" height="14" fill="#5a6580" fill-opacity="0.5" stroke="#8a96b0"/><path d="M4 11 V4 H11" fill="none" stroke="#b8c2d8" stroke-width="1.2"/><path d="M6 6 L11 11 M11 7.5 V11 H7.5" fill="none" stroke="#e8eef8" stroke-width="1.3"/></svg>
<div class="t" style="left:121.00px;top:149.85px;font-size:14px;line-height:14px;color:#e6e6e6;transform:scaleX(0.9824);">Attach</div>
<div class="a" style="left:186px;top:93px;width:51px;height:75px;border:1px solid #1a1c20;border-radius:3px;background:linear-gradient(#56617a,#4a546a 36px,#323640 37px,#26282d);box-shadow:inset 0 0 0 1px #5d6a84"></div>
<svg class="a" style="left:192px;top:101px;" width="38" height="38" viewBox="0 0 44 44"><path d="M8.2 4.8 L22.1 4.8 L22.1 25 L4.4 25Z" fill="#a8d8ff"/><path d="M4.4 25 H22.1 V37.7 H1.7Z" fill="#2a80e0"/><path d="M27.2 4.8 H41.9 L37.6 25 H23.5Z" fill="#c8ecff"/><path d="M23.5 25 H37.6 L34.7 37.7 H22.6Z" fill="#4aaef8"/><path d="M0.6 21.6 L6 11 L8 15 L17 8 L20 13 L11 20 L14 23Z" fill="#20c020" stroke="#0e800e" stroke-width="0.6"/><circle cx="21.3" cy="5.2" r="1.8" fill="#f01010"/><circle cx="27.5" cy="5.2" r="1.8" fill="#f01010"/></svg>
<div class="t" style="left:194.70px;top:149.85px;font-size:14px;line-height:14px;color:#e6e6e6;transform:scaleX(0.9074);">Break</div>
<div class="a" style="left:242px;top:93px;width:78px;height:75px;border:1px solid #1a1c20;border-radius:3px;background:linear-gradient(#56617a,#4a546a 36px,#323640 37px,#26282d);box-shadow:inset 0 0 0 1px #5d6a84"></div>
<svg class="a" style="left:262px;top:101px;" width="38" height="38" viewBox="0 0 44 44"><defs><linearGradient id="tc" x1="0" y1="0" x2="1" y2="0"><stop offset="0" stop-color="#8a9ab0"/><stop offset="0.5" stop-color="#c0cad8"/><stop offset="1" stop-color="#7a8aa0"/></linearGradient></defs><path d="M4.5 6 L39.4 6 L34 39 Q22 43 10 39Z" fill="url(#tc)" fill-opacity="0.85"/><ellipse cx="22" cy="38.5" rx="12" ry="4.5" fill="#f0f0f0"/><ellipse cx="22" cy="36" rx="11" ry="3" fill="#d8dce0"/><ellipse cx="22" cy="6" rx="17.3" ry="3.6" fill="none" stroke="#e8e8e8" stroke-width="1.6"/><ellipse cx="22" cy="7" rx="16" ry="2.5" fill="none" stroke="#707070" stroke-width="0.8"/><path d="M11 18 L14 15 L17 19 M12 24 V29 M17 28 Q22 31 23 25 L20 25" fill="none" stroke="#2060e0" stroke-width="2"/></svg>
<svg class="a" style="left:303px;top:96px;" width="15" height="15" viewBox="0 0 15 15"><rect x="0.5" y="0.5" width="14" height="14" fill="#5a6580" fill-opacity="0.5" stroke="#8a96b0"/><path d="M4 11 V4 H11" fill="none" stroke="#b8c2d8" stroke-width="1.2"/><path d="M6 6 L11 11 M11 7.5 V11 H7.5" fill="none" stroke="#e8eef8" stroke-width="1.3"/></svg>
<div class="t" style="left:262.50px;top:149.85px;font-size:14px;line-height:14px;color:#e6e6e6;transform:scaleX(0.9457);">Delete</div>
<div class="a" style="left:326px;top:93px;width:50px;height:75px;border:1px solid #1a1c20;border-radius:3px;background:linear-gradient(#56617a,#4a546a 36px,#323640 37px,#26282d);box-shadow:inset 0 0 0 1px #5d6a84"></div>
<svg class="a" style="left:332px;top:101px;" width="38" height="38" viewBox="0 0 44 44"><path d="M2.9 13.9 L15 4.6 L27.8 2.6 L39.4 5.8 L40.5 33.6 L29 43 L4.6 35.9Z" fill="#8ab8e0"/><path d="M2.9 13.9 L15 4.6 L27.8 2.6 L24 20 L4.6 35.9Z" fill="#20405e"/><path d="M27.8 2.6 L39.4 5.8 L40.5 33.6 L29 30 L24 20Z" fill="#b8d8f8"/><path d="M4.6 35.9 L24 20 L29 30 L29 43Z" fill="#5a90c8"/><path d="M2.9 13.9 L24 20 L39.4 5.8 M24 20 L29 43" stroke="#d0e0f0" stroke-width="0.9" fill="none"/><path d="M2.9 13.9 L15 4.6 L27.8 2.6 L39.4 5.8 L40.5 33.6 L29 43 L4.6 35.9Z" fill="none" stroke="#1a2a40" stroke-width="1"/></svg>
<div class="t" style="left:341.00px;top:149.85px;font-size:14px;line-height:14px;color:#e6e6e6;transform:scaleX(0.9159);">Flip</div>
<div class="a" style="left:382px;top:93px;width:50px;height:75px;border:1px solid #1a1c20;border-radius:3px;background:linear-gradient(#56617a,#4a546a 36px,#323640 37px,#26282d);box-shadow:inset 0 0 0 1px #5d6a84"></div>
<svg class="a" style="left:388px;top:101px;" width="38" height="38" viewBox="0 0 44 44"><path d="M1.6 7 Q20 4 41 6 L40 42 Q20 45 2 43Z" fill="#3a98ec"/><path d="M1.6 7 L14 6 L14 19 L2 20Z M27 5.5 L41 6 L40.5 19 L27 19.5Z M14 19 L27 19.5 L27 31 L14 31Z M2 31 L14 31 L14 43 L2 43Z" fill="#c8e8ff"/><path d="M14 6 V43 M27 5.5 V43 M2 19.5 H41 M2 31 H40.5" stroke="#1a68c0" stroke-width="0.7"/><path d="M7 37 L38 9" stroke="#e01010" stroke-width="6" stroke-linecap="round"/><path d="M9 35 L36 11" stroke="#f8f8f8" stroke-width="1.6"/><circle cx="27" cy="19" r="2" fill="#111"/><path d="M2 13 L16 44" stroke="#e01010" stroke-width="1.2"/></svg>
<svg class="a" style="left:415px;top:96px;" width="15" height="15" viewBox="0 0 15 15"><rect x="0.5" y="0.5" width="14" height="14" fill="#5a6580" fill-opacity="0.5" stroke="#8a96b0"/><path d="M4 11 V4 H11" fill="none" stroke="#b8c2d8" stroke-width="1.2"/><path d="M6 6 L11 11 M11 7.5 V11 H7.5" fill="none" stroke="#e8eef8" stroke-width="1.3"/></svg>
<div class="t" style="left:390.00px;top:149.85px;font-size:14px;line-height:14px;color:#e6e6e6;transform:scaleX(0.9914);">Insert</div>
<div class="a" style="left:438px;top:93px;width:50px;height:75px;border:1px solid #1a1c20;border-radius:3px;background:linear-gradient(#56617a,#4a546a 36px,#323640 37px,#26282d);box-shadow:inset 0 0 0 1px #5d6a84"></div>
<svg class="a" style="left:444px;top:101px;" width="38" height="38" viewBox="0 0 44 44"><defs><linearGradient id="mrl" x1="0" y1="0" x2="0" y2="1"><stop offset="0" stop-color="#eef8ff"/><stop offset="1" stop-color="#4a88f0"/></linearGradient><linearGradient id="mrr" x1="0" y1="0" x2="0" y2="1"><stop offset="0" stop-color="#f0f4ff"/><stop offset="1" stop-color="#8aa8e0"/></linearGradient></defs><path d="M15.4 3.9 L3.1 21.6 L9.5 21.6 L2.3 33.6 L15.4 42.8Z" fill="url(#mrl)" stroke="#102050" stroke-width="0.8"/><path d="M28.9 4.6 L41.7 21.6 L34.7 21.6 L42 33.6 L28.9 42.8Z" fill="url(#mrr)" stroke="#202a50" stroke-width="0.8"/><rect x="20.4" y="2.3" width="2.8" height="41.3" fill="#0a0e60"/></svg>
<svg class="a" style="left:471px;top:96px;" width="15" height="15" viewBox="0 0 15 15"><rect x="0.5" y="0.5" width="14" height="14" fill="#5a6580" fill-opacity="0.5" stroke="#8a96b0"/><path d="M4 11 V4 H11" fill="none" stroke="#b8c2d8" stroke-width="1.2"/><path d="M6 6 L11 11 M11 7.5 V11 H7.5" fill="none" stroke="#e8eef8" stroke-width="1.3"/></svg>
<div class="t" style="left:444.70px;top:149.85px;font-size:14px;line-height:14px;color:#e6e6e6;transform:scaleX(1.0493);">Mirror</div>
<div class="a" style="left:494px;top:93px;width:50px;height:75px;border:1px solid #1a1c20;border-radius:3px;background:linear-gradient(#56617a,#4a546a 36px,#323640 37px,#26282d);box-shadow:inset 0 0 0 1px #5d6a84"></div>
<svg class="a" style="left:498px;top:99px;" width="42" height="42" viewBox="0 0 44 44"><defs><linearGradient id="mv" x1="0" y1="0" x2="0" y2="1"><stop offset="0" stop-color="#90ffa0"/><stop offset="1" stop-color="#10a030"/></linearGradient></defs><path d="M22 3 L41 22 L22 41 L3 22Z" fill="url(#mv)"/><path d="M22 3 L41 22 L22 22Z" fill="#40d050" opacity="0.6"/><rect x="13" y="13" width="6" height="6" fill="#3a4050" opacity="0.7"/><rect x="25" y="13" width="6" height="6" fill="#3a4050" opacity="0.7"/><rect x="13" y="25" width="6" height="6" fill="#3a4050" opacity="0.7"/><rect x="25" y="25" width="6" height="6" fill="#3a4050" opacity="0.7"/></svg>
<svg class="a" style="left:527px;top:96px;" width="15" height="15" viewBox="0 0 15 15"><rect x="0.5" y="0.5" width="14" height="14" fill="#5a6580" fill-opacity="0.5" stroke="#8a96b0"/><path d="M4 11 V4 H11" fill="none" stroke="#b8c2d8" stroke-width="1.2"/><path d="M6 6 L11 11 M11 7.5 V11 H7.5" fill="none" stroke="#e8eef8" stroke-width="1.3"/></svg>
<div class="t" style="left:502.50px;top:149.85px;font-size:14px;line-height:14px;color:#e6e6e6;transform:scaleX(1.0088);">Move</div>
<div class="a" style="left:550px;top:93px;width:50px;height:75px;border:1px solid #1a1c20;border-radius:3px;background:linear-gradient(#56617a,#4a546a 36px,#323640 37px,#26282d);box-shadow:inset 0 0 0 1px #5d6a84"></div>
<svg class="a" style="left:556px;top:101px;" width="38" height="38" viewBox="0 0 44 44"><path d="M30 10 Q22 4 14 9 Q6 15 9 26 Q13 35 24 34" fill="none" stroke="#2038e0" stroke-width="6"/><path d="M30 10 Q22 4 14 9" fill="none" stroke="#6080ff" stroke-width="2"/><path d="M22 28 L31 34 L22 41Z" fill="#2038e0"/><path d="M28 8 L35 16" stroke="#2038e0" stroke-width="5"/></svg>
<svg class="a" style="left:583px;top:96px;" width="15" height="15" viewBox="0 0 15 15"><rect x="0.5" y="0.5" width="14" height="14" fill="#5a6580" fill-opacity="0.5" stroke="#8a96b0"/><path d="M4 11 V4 H11" fill="none" stroke="#b8c2d8" stroke-width="1.2"/><path d="M6 6 L11 11 M11 7.5 V11 H7.5" fill="none" stroke="#e8eef8" stroke-width="1.3"/></svg>
<div class="t" style="left:555.50px;top:149.85px;font-size:14px;line-height:14px;color:#e6e6e6;transform:scaleX(0.9515);">Rotate</div>
<div class="a" style="left:606px;top:93px;width:50px;height:75px;border:1px solid #1a1c20;border-radius:3px;background:linear-gradient(#56617a,#4a546a 36px,#323640 37px,#26282d);box-shadow:inset 0 0 0 1px #5d6a84"></div>
<svg class="a" style="left:612px;top:101px;" width="38" height="38" viewBox="0 0 44 44"><rect x="1.2" y="6.5" width="41.6" height="35.2" fill="#98b4d4" stroke="#c8dcf0" stroke-width="0.8"/><rect x="1.6" y="23" width="19" height="18.5" fill="#e87878" stroke="#d00808" stroke-width="1.6"/><path d="M9.8 23 V12" stroke="#1030e0" stroke-width="3.2"/><path d="M4.5 13.5 L9.8 6 L15 13.5Z" fill="#1030e0"/><path d="M20.5 32.6 H33" stroke="#1030e0" stroke-width="3.2"/><path d="M31 27 L39 32.6 L31 38Z" fill="#1030e0"/></svg>
<div class="t" style="left:616.00px;top:149.85px;font-size:14px;line-height:14px;color:#e6e6e6;transform:scaleX(0.8514);">Scale</div>
<div class="a" style="left:661px;top:93px;width:529px;height:77px;border:1px solid #4a5878;border-radius:3px;background:linear-gradient(#383f4e,#2a2d34 30px,#262729)"></div>
<div class="a" style="left:662px;top:94px;width:527px;height:18px;background:linear-gradient(#7d8fb0,#5d6e90 50%,#4e5d7c 51%,#46546f)"></div>
<svg class="a" style="left:668px;top:98px;" width="12" height="8" viewBox="0 0 12 8"><path d="M0 7 L6 1 L12 7Z" fill="#f0f0f0"/></svg>
<div class="t" style="left:902.00px;top:97.45px;font-size:14px;line-height:14px;color:#e6e6e6;transform:scaleX(0.9138);">Submesh...</div>
<div class="a" style="left:667px;top:114px;width:51px;height:50px;border:1px solid #15171b;border-radius:3px;background:linear-gradient(#4e586c,#444d60 22px,#2f333b 23px,#282a30);box-shadow:inset 0 0 0 1px #56627a"></div>
<svg class="a" style="left:672px;top:118px;" width="41" height="41" viewBox="0 0 44 44"><path d="M6 14 Q6 6 16 6 L34 8 Q40 10 40 18 L38 34 Q36 40 28 40 L10 38 Q4 36 4 30Z" fill="#6ab0f0"/><path d="M6 14 Q6 6 16 6 L34 8 Q40 10 38 16 L12 18Z" fill="#d8f0ff"/><path d="M28 20 L38 18 L36 38 L26 40Z" fill="#3a80d0"/></svg>
<div class="a" style="left:723px;top:114px;width:51px;height:50px;border:1px solid #15171b;border-radius:3px;background:linear-gradient(#4e586c,#444d60 22px,#2f333b 23px,#282a30);box-shadow:inset 0 0 0 1px #56627a"></div>
<svg class="a" style="left:728px;top:118px;" width="41" height="41" viewBox="0 0 44 44"><path d="M8 10 L30 4 L40 14 L36 32 L16 36 L6 26Z" fill="#4a90e0"/><path d="M8 10 L30 4 L24 18Z" fill="#a8d8ff"/><circle cx="12" cy="14" r="1.2" fill="#f02020"/><circle cx="30" cy="8" r="1.2" fill="#f02020"/><circle cx="22" cy="28" r="1.2" fill="#f02020"/><path d="M6 40 L16 26 L24 32 L14 42Z" fill="#e8c070"/><path d="M16 26 L38 8" stroke="#a06020" stroke-width="3"/></svg>
<div class="a" style="left:779px;top:114px;width:51px;height:50px;border:1px solid #15171b;border-radius:3px;background:linear-gradient(#4e586c,#444d60 22px,#2f333b 23px,#282a30);box-shadow:inset 0 0 0 1px #56627a"></div>
<svg class="a" style="left:784px;top:118px;" width="41" height="41" viewBox="0 0 44 44"><path d="M10 10 L30 6 L40 12 L36 36 L20 40 L10 32Z" fill="#6ab0f0"/><path d="M10 10 L30 6 L26 18 L12 20Z" fill="#c8e8ff"/><path d="M22 22 L36 20 L36 36 L22 38Z" fill="#3a90e8"/><path d="M4 22 L18 20 L18 36 L10 40Z" fill="#e02020"/><circle cx="30" cy="30" r="1.2" fill="#f02020"/></svg>
<svg class="a" style="left:812px;top:117px;" width="15" height="15" viewBox="0 0 15 15"><rect x="0.5" y="0.5" width="14" height="14" fill="#5a6580" fill-opacity="0.5" stroke="#8a96b0"/><path d="M4 11 V4 H11" fill="none" stroke="#b8c2d8" stroke-width="1.2"/><path d="M6 6 L11 11 M11 7.5 V11 H7.5" fill="none" stroke="#e8eef8" stroke-width="1.3"/></svg>
<div class="a" style="left:835px;top:114px;width:51px;height:50px;border:1px solid #15171b;border-radius:3px;background:linear-gradient(#4e586c,#444d60 22px,#2f333b 23px,#282a30);box-shadow:inset 0 0 0 1px #56627a"></div>
<svg class="a" style="left:840px;top:118px;" width="41" height="41" viewBox="0 0 44 44"><path d="M6 6 L34 4 L36 36 L8 40Z" fill="#6ab0f0"/><path d="M6 6 L18 5 L18 40 L8 40Z" fill="#c8e8ff"/><path d="M16 18 L30 16 L34 34 L18 36Z" fill="#d01020"/><path d="M28 28 L40 38" stroke="#1a30d0" stroke-width="4"/></svg>
<svg class="a" style="left:868px;top:117px;" width="15" height="15" viewBox="0 0 15 15"><rect x="0.5" y="0.5" width="14" height="14" fill="#5a6580" fill-opacity="0.5" stroke="#8a96b0"/><path d="M4 11 V4 H11" fill="none" stroke="#b8c2d8" stroke-width="1.2"/><path d="M6 6 L11 11 M11 7.5 V11 H7.5" fill="none" stroke="#e8eef8" stroke-width="1.3"/></svg>
<div class="a" style="left:891px;top:114px;width:51px;height:50px;border:1px solid #15171b;border-radius:3px;background:linear-gradient(#4e586c,#444d60 22px,#2f333b 23px,#282a30);box-shadow:inset 0 0 0 1px #56627a"></div>
<svg class="a" style="left:896px;top:118px;" width="41" height="41" viewBox="0 0 44 44"><path d="M6 24 L22 18 L40 24 L40 34 L24 40 L6 34Z" fill="#3a80d8"/><path d="M6 24 L22 18 L40 24 L24 30Z" fill="#90c8f8"/><rect x="8" y="20" width="14" height="8" fill="#e03030"/><path d="M15 20 V8 M9 12 L15 2 L21 12Z" stroke="#1a40e0" stroke-width="3" fill="#1a40e0"/></svg>
<svg class="a" style="left:924px;top:117px;" width="15" height="15" viewBox="0 0 15 15"><rect x="0.5" y="0.5" width="14" height="14" fill="#5a6580" fill-opacity="0.5" stroke="#8a96b0"/><path d="M4 11 V4 H11" fill="none" stroke="#b8c2d8" stroke-width="1.2"/><path d="M6 6 L11 11 M11 7.5 V11 H7.5" fill="none" stroke="#e8eef8" stroke-width="1.3"/></svg>
<div class="a" style="left:947px;top:114px;width:51px;height:50px;border:1px solid #15171b;border-radius:3px;background:linear-gradient(#4e586c,#444d60 22px,#2f333b 23px,#282a30);box-shadow:inset 0 0 0 1px #56627a"></div>
<svg class="a" style="left:952px;top:118px;" width="41" height="41" viewBox="0 0 44 44"><path d="M4 12 L20 8 L38 10 L38 36 L22 38 L6 36Z" fill="#4a98e8"/><path d="M4 12 L20 8 L20 24 L5 26Z" fill="#b8e0ff"/><path d="M20 8 V38 M5 24 H38" stroke="#1a60b0" stroke-width="0.8"/><path d="M10 34 L36 6" stroke="#e01010" stroke-width="4"/><path d="M13 31 L33 9" stroke="#fff" stroke-width="1.3"/><path d="M4 30 Q20 24 38 26" stroke="#e01010" stroke-width="1.2" fill="none"/></svg>
<svg class="a" style="left:980px;top:117px;" width="15" height="15" viewBox="0 0 15 15"><rect x="0.5" y="0.5" width="14" height="14" fill="#5a6580" fill-opacity="0.5" stroke="#8a96b0"/><path d="M4 11 V4 H11" fill="none" stroke="#b8c2d8" stroke-width="1.2"/><path d="M6 6 L11 11 M11 7.5 V11 H7.5" fill="none" stroke="#e8eef8" stroke-width="1.3"/></svg>
<div class="a" style="left:1003px;top:114px;width:51px;height:50px;border:1px solid #15171b;border-radius:3px;background:linear-gradient(#4e586c,#444d60 22px,#2f333b 23px,#282a30);box-shadow:inset 0 0 0 1px #56627a"></div>
<svg class="a" style="left:1008px;top:118px;" width="41" height="41" viewBox="0 0 44 44"><rect x="4" y="4" width="36" height="36" fill="#3a90e0"/><path d="M4 4 L40 40 M40 4 L4 40 M22 4 V40 M4 22 H40" stroke="#1a60b0" stroke-width="1"/><path d="M10 12 L34 10 L32 34 L12 32Z" fill="#e83030"/><path d="M10 12 L32 34" stroke="#901010" stroke-width="1"/></svg>
<div class="a" style="left:1059px;top:114px;width:51px;height:50px;border:1px solid #15171b;border-radius:3px;background:linear-gradient(#4e586c,#444d60 22px,#2f333b 23px,#282a30);box-shadow:inset 0 0 0 1px #56627a"></div>
<svg class="a" style="left:1064px;top:118px;" width="41" height="41" viewBox="0 0 44 44"><path d="M2 28 L22 20 L40 28 L40 38 L22 42 L2 38Z" fill="#c8a040"/><path d="M8 10 L26 4 L38 10 L36 32 L20 36 L8 30Z" fill="#4aa0f0"/><path d="M8 10 L26 4 L38 10 L22 16Z" fill="#c8e8ff"/><path d="M6 26 L22 34 L38 26" stroke="#e02020" stroke-width="1.5" fill="none"/></svg>
<svg class="a" style="left:1092px;top:117px;" width="15" height="15" viewBox="0 0 15 15"><rect x="0.5" y="0.5" width="14" height="14" fill="#5a6580" fill-opacity="0.5" stroke="#8a96b0"/><path d="M4 11 V4 H11" fill="none" stroke="#b8c2d8" stroke-width="1.2"/><path d="M6 6 L11 11 M11 7.5 V11 H7.5" fill="none" stroke="#e8eef8" stroke-width="1.3"/></svg>
<div class="a" style="left:1115px;top:114px;width:51px;height:50px;border:1px solid #15171b;border-radius:3px;background:linear-gradient(#4e586c,#444d60 22px,#2f333b 23px,#282a30);box-shadow:inset 0 0 0 1px #56627a"></div>
<svg class="a" style="left:1120px;top:118px;" width="41" height="41" viewBox="0 0 44 44"><rect x="4" y="4" width="36" height="36" fill="#4aa0f0"/><path d="M4 16 H40 M4 28 H40 M16 4 V40 M28 4 V40" stroke="#1a60b0" stroke-width="1.5"/><path d="M10 10 L18 18 L14 30 L24 32" stroke="#e01080" stroke-width="1.5" fill="none"/><circle cx="18" cy="18" r="1.5" fill="#e01080"/><circle cx="14" cy="30" r="1.5" fill="#e01080"/></svg>
<svg class="a" style="left:1148px;top:117px;" width="15" height="15" viewBox="0 0 15 15"><rect x="0.5" y="0.5" width="14" height="14" fill="#5a6580" fill-opacity="0.5" stroke="#8a96b0"/><path d="M4 11 V4 H11" fill="none" stroke="#b8c2d8" stroke-width="1.2"/><path d="M6 6 L11 11 M11 7.5 V11 H7.5" fill="none" stroke="#e8eef8" stroke-width="1.3"/></svg>
<div class="a" style="left:1399px;top:62px;width:91px;height:21px;border-radius:2px;background:linear-gradient(#5a6a8a,#46536e 45%,#353d4e 50%,#2e3442);border-bottom:1px solid #6a7a98"></div>
<div class="t" style="left:1404.00px;top:64.95px;font-size:14px;line-height:14px;color:#e6e6e6;transform:scaleX(1.0076);">:Right button</div>
<div class="a" style="left:62px;top:258px;width:16px;height:617px;background:#262627"></div>
<div class="a" style="left:63px;top:258px;width:1px;height:617px;background:#3a3f4a"></div>
<div class="a" style="left:70px;top:258px;width:1px;height:617px;background:#3a3f4a"></div>
<div class="a" style="left:77px;top:259px;width:1411px;height:26px;border-top:1px solid #7a8aa2;background:linear-gradient(#2a3040 0px,#2a3040 1px,#5670a0 1px,#3e5075 12px,#373d4b 12px,#262629 24px,#1c1c1e 25px)"></div>
<div class="a" style="left:78px;top:260px;width:27px;height:23px;border:1px solid #1a1c22;border-radius:2px;background:linear-gradient(#7488b0,#5a6c92 10px,#2c3240 11px,#20232a);box-shadow:inset 1px 1px 0 #b8c4dc"></div>
<div class="t" style="left:82.00px;top:267.15px;font-size:14px;line-height:14px;color:#f4f4f4;font-weight:bold;transform:scaleX(1.1006);">3D</div>
<div class="a" style="left:105px;top:259px;width:2px;height:26px;background:#6a7896;opacity:0.6"></div>
<svg class="a" style="left:116px;top:270px;" width="6" height="9" viewBox="0 0 6 9"><path d="M6 0 V9 L0 4.5Z" fill="#e8e8e8"/></svg>
<div class="t" style="left:135.00px;top:267.15px;font-size:14px;line-height:14px;color:#e6e6e6;transform:scaleX(1.0638);">Tripod</div>
<div class="t" style="left:187.30px;top:267.15px;font-size:14px;line-height:14px;color:#e6e6e6;transform:scaleX(1.0643);">Image</div>
<div class="t" style="left:239.00px;top:267.15px;font-size:14px;line-height:14px;color:#e6e6e6;transform:scaleX(1.0746);">Color</div>
<div class="t" style="left:285.30px;top:267.15px;font-size:14px;line-height:14px;color:#e6e6e6;transform:scaleX(1.0227);">Grid</div>
<div class="t" style="left:323.30px;top:267.15px;font-size:14px;line-height:14px;color:#e6e6e6;transform:scaleX(1.0514);">Pivot</div>
<div class="a" style="left:1131px;top:260px;width:151px;height:23px;border:1px solid #1a1c22;border-radius:2px;background:linear-gradient(#5e6f94,#4e5e80 10px,#2e3440 11px,#262a33);box-shadow:inset 0 0 0 1px #6a7a98"></div>
<svg class="a" style="left:1138px;top:263px;" width="18" height="17" viewBox="0 0 18 17"><path d="M2 14 L10 3 Q15 1 16 5 L10 15 Q6 17 2 14Z" fill="#6ab0f0"/></svg>
<svg class="a" style="left:1158px;top:263px;" width="18" height="17" viewBox="0 0 18 17"><path d="M3 15 L15 3" stroke="#c040e0" stroke-width="3"/><circle cx="3" cy="15" r="2" fill="#8020a0"/><circle cx="15" cy="3" r="2" fill="#8020a0"/></svg>
<svg class="a" style="left:1180px;top:263px;" width="18" height="17" viewBox="0 0 18 17"><path d="M2 14 L9 3 L17 5 L15 15Z" fill="#e03030"/><path d="M5 12 L10 5 L15 7 L13 14Z" fill="#4a90e0"/></svg>
<svg class="a" style="left:1201px;top:263px;" width="16" height="16" viewBox="0 0 16 16"><rect x="1" y="1" width="14" height="14" fill="#f0a030"/><path d="M1 1h3.5v3.5H1zM8 1h3.5v3.5H8zM4.5 4.5H8V8H4.5zM11.5 4.5H15V8h-3.5zM1 8h3.5v3.5H1zM8 8h3.5v3.5H8zM4.5 11.5H8V15H4.5zM11.5 11.5H15V15h-3.5z" fill="#3a20a0"/></svg>
<svg class="a" style="left:1222px;top:263px;" width="18" height="17" viewBox="0 0 18 17"><rect x="3" y="7" width="13" height="9" fill="#2a2a2a"/><path d="M3 5 L15 2 L16 5 L4 8Z" fill="#3a3a3a"/></svg>
<svg class="a" style="left:1244px;top:263px;" width="16" height="17" viewBox="0 0 16 17"><circle cx="8" cy="6" r="5" fill="#f0f070"/><rect x="6" y="11" width="4" height="5" fill="#b0b060"/></svg>
<svg class="a" style="left:1266px;top:269px;" width="8" height="5" viewBox="0 0 8 5"><path d="M0 0 H8 L4 4Z" fill="#e0e0e0"/></svg>
<div class="a" style="left:1287px;top:261px;width:66px;height:22px;border:1px solid #1a1c22;border-radius:2px;background:linear-gradient(#5e6f94,#4e5e80 9px,#2e3440 10px,#262a33);box-shadow:inset 0 0 0 1px #6a7a98"></div>
<div class="t" style="left:1315.00px;top:266.45px;font-size:14px;line-height:14px;color:#e6e6e6;transform:scaleX(0.9581);">Zoom</div>
<div class="a" style="left:1355px;top:261px;width:53px;height:22px;border:1px solid #1a1c22;border-radius:2px;background:linear-gradient(#5e6f94,#4e5e80 9px,#2e3440 10px,#262a33);box-shadow:inset 0 0 0 1px #6a7a98"></div>
<div class="t" style="left:1383.40px;top:266.45px;font-size:14px;line-height:14px;color:#e6e6e6;transform:scaleX(0.8514);">Pan</div>
<div class="a" style="left:1410px;top:261px;width:46px;height:22px;border:1px solid #1a1c22;border-radius:2px;background:linear-gradient(#5e6f94,#4e5e80 9px,#2e3440 10px,#262a33);box-shadow:inset 0 0 0 1px #6a7a98"></div>
<div class="t" style="left:1437.80px;top:266.45px;font-size:14px;line-height:14px;color:#e6e6e6;transform:scaleX(0.8910);">Fit</div>
<svg class="a" style="left:1291px;top:264px;" width="16" height="17" viewBox="0 0 16 17"><circle cx="6.5" cy="6.5" r="5.5" fill="#e8eef8" stroke="#b0b8c8"/><path d="M10 10 L15 15" stroke="#602010" stroke-width="2.5"/></svg>
<svg class="a" style="left:1360px;top:263px;" width="16" height="17" viewBox="0 0 16 17"><path d="M3 9 V4 Q4 2 5 4 V8 V2 Q6 0 7 2 V8 V1 Q8 -1 9 1 V8 V3 Q10 1 11 3 V10 L13 8 Q15 8 14 10 L10 16 H5 Q3 14 3 9Z" fill="#e8f0ff" stroke="#8090b0" stroke-width="0.6"/></svg>
<svg class="a" style="left:1414px;top:263px;" width="16" height="17" viewBox="0 0 16 17"><rect x="5" y="5" width="10" height="10" fill="#b0e090"/><path d="M1 1 H5 M1 1 V5 M15 1 H11 M15 1 V5 M1 16 H5 M1 16 V12 M15 16 H11 M15 16 V12" stroke="#111" stroke-width="1.5"/><circle cx="5" cy="5" r="3" fill="#802030"/></svg>
<div class="a" style="left:1461px;top:261px;width:24px;height:22px;border:1px solid #1a1c22;border-radius:2px;background:linear-gradient(#5e6f94,#4e5e80 9px,#2e3440 10px,#262a33);box-shadow:inset 0 0 0 1px #6a7a98"></div>
<div class="a" style="left:1466px;top:266px;width:12px;height:12px;border:2px solid #e8e8e8"></div>
<div class="a" style="left:77px;top:285px;width:1411px;height:589px;background:#c9c9c9;border-bottom:1px solid #222"></div>
<div class="a" style="left:77px;top:285px;width:6px;height:589px;background:linear-gradient(90deg,#a8a8a8,#c9c9c9)"></div>
<div class="a" style="left:77px;top:285px;width:1411px;height:6px;background:linear-gradient(#a0a0a0,#c9c9c9)"></div>
<svg class="a" style="left:77px;top:285px;" width="1411" height="589" viewBox="0 0 1411 589"><line x1="0" y1="276" x2="1411" y2="229" stroke="#6b7fa0" stroke-width="1" shape-rendering="crispEdges"/><line x1="743" y1="88" x2="914" y2="589" stroke="#6b7fa0" stroke-width="1" shape-rendering="crispEdges"/><polygon points="768.6,45.0 772.8,50.4 776.9,55.8 781.0,61.2 785.0,66.6 788.9,72.0 792.8,77.4 796.6,82.8 800.3,88.2 804.0,93.6 807.6,99.0 811.2,104.4 814.7,109.8 818.2,115.2 821.6,120.6 824.9,126.0 828.2,131.4 831.5,136.8 834.7,142.2 837.9,147.6 841.0,153.0 844.0,158.4 847.1,163.8 850.1,169.2 853.0,174.6 855.9,180.0 858.8,185.4 861.6,190.8 864.4,196.2 867.2,201.6 869.9,207.0 872.6,212.4 875.3,217.8 877.9,223.2 880.6,228.6 883.2,234.0 885.7,239.4 888.3,244.8 890.8,250.2 893.3,255.6 895.8,261.0 898.3,266.4 900.7,271.8 903.2,277.2 905.6,282.6 908.0,288.0 910.4,293.4 912.8,298.8 915.2,304.2 917.6,309.6 920.0,315.0 922.4,320.4 924.7,325.8 927.1,331.2 929.5,336.6 931.8,342.0 934.2,347.4 936.6,352.8 939.0,358.2 941.4,363.6 943.8,369.0 946.2,374.4 948.6,379.8 951.0,385.2 953.5,390.6 955.9,396.0 958.4,401.4 960.9,406.8 963.4,412.2 966.0,417.6 968.5,423.0 971.1,428.4 973.7,433.8 976.3,439.2 979.0,444.6 981.6,450.0 984.4,455.4 987.1,460.8 989.9,466.2 992.7,471.6 995.5,477.0 1000.2,475.6 997.4,470.2 994.6,464.9 991.8,459.5 989.0,454.1 986.2,448.7 983.5,443.3 980.9,437.9 978.2,432.5 975.6,427.1 973.0,421.7 970.4,416.3 967.8,410.9 965.2,405.5 962.7,400.2 960.2,394.8 957.7,389.4 955.2,384.0 952.8,378.6 950.3,373.2 947.8,367.8 945.4,362.4 943.0,357.0 940.5,351.6 938.1,346.2 935.7,340.8 933.3,335.5 930.9,330.1 928.5,324.7 926.0,319.3 923.6,313.9 921.2,308.5 918.8,303.1 916.3,297.7 913.9,292.3 911.4,286.9 909.0,281.5 906.5,276.1 904.0,270.7 901.5,265.4 899.0,260.0 896.4,254.6 893.9,249.2 891.3,243.8 888.7,238.4 886.1,233.0 883.5,227.6 880.8,222.2 878.1,216.8 875.4,211.4 872.6,206.0 869.8,200.7 867.0,195.3 864.2,189.9 861.3,184.5 858.4,179.1 855.4,173.7 852.4,168.3 849.4,162.9 846.3,157.5 843.2,152.1 840.0,146.7 836.8,141.3 833.6,136.0 830.3,130.6 827.0,125.2 823.6,119.8 820.1,114.4 816.6,109.0 813.1,103.6 809.4,98.2 805.8,92.8 802.1,87.4 798.3,82.0 794.4,76.6 790.5,71.3 786.6,65.9 782.5,60.5 778.4,55.1 774.3,49.7 770.0,44.3" fill="#3c3c2d" stroke="#3c3c2d" stroke-width="0.6"/><polygon points="770.0,44.3 774.3,49.7 778.4,55.1 782.5,60.5 786.6,65.9 790.5,71.3 794.4,76.6 798.3,82.0 802.1,87.4 805.8,92.8 809.4,98.2 813.1,103.6 816.6,109.0 820.1,114.4 823.6,119.8 827.0,125.2 830.3,130.6 833.6,136.0 836.8,141.3 840.0,146.7 843.2,152.1 846.3,157.5 849.4,162.9 852.4,168.3 855.4,173.7 858.4,179.1 861.3,184.5 864.2,189.9 867.0,195.3 869.8,200.7 872.6,206.0 875.4,211.4 878.1,216.8 880.8,222.2 883.5,227.6 886.1,233.0 888.7,238.4 891.3,243.8 893.9,249.2 896.4,254.6 899.0,260.0 901.5,265.4 904.0,270.7 906.5,276.1 909.0,281.5 911.4,286.9 913.9,292.3 916.3,297.7 918.8,303.1 921.2,308.5 923.6,313.9 926.0,319.3 928.5,324.7 930.9,330.1 933.3,335.5 935.7,340.8 938.1,346.2 940.5,351.6 943.0,357.0 945.4,362.4 947.8,367.8 950.3,373.2 952.8,378.6 955.2,384.0 957.7,389.4 960.2,394.8 962.7,400.2 965.2,405.5 967.8,410.9 970.4,416.3 973.0,421.7 975.6,427.1 978.2,432.5 980.9,437.9 983.5,443.3 986.2,448.7 989.0,454.1 991.8,459.5 994.6,464.9 997.4,470.2 1000.2,475.6 1003.9,474.6 1001.0,469.2 998.1,463.8 995.3,458.4 992.5,453.1 989.8,447.7 987.0,442.3 984.3,436.9 981.6,431.5 979.0,426.1 976.4,420.7 973.7,415.4 971.1,410.0 968.6,404.6 966.0,399.2 963.5,393.8 960.9,388.4 958.4,383.0 955.9,377.7 953.4,372.3 951.0,366.9 948.5,361.5 946.0,356.1 943.6,350.7 941.1,345.3 938.7,340.0 936.2,334.6 933.8,329.2 931.3,323.8 928.9,318.4 926.4,313.0 924.0,307.6 921.5,302.3 919.0,296.9 916.5,291.5 914.1,286.1 911.6,280.7 909.0,275.3 906.5,269.9 904.0,264.6 901.4,259.2 898.8,253.8 896.3,248.4 893.6,243.0 891.0,237.6 888.3,232.2 885.7,226.9 883.0,221.5 880.2,216.1 877.5,210.7 874.7,205.3 871.9,199.9 869.0,194.5 866.1,189.2 863.2,183.8 860.3,178.4 857.3,173.0 854.2,167.6 851.2,162.2 848.1,156.8 844.9,151.5 841.7,146.1 838.5,140.7 835.2,135.3 831.9,129.9 828.5,124.5 825.1,119.2 821.6,113.8 818.1,108.4 814.5,103.0 810.8,97.6 807.1,92.2 803.4,86.8 799.6,81.5 795.7,76.1 791.8,70.7 787.8,65.3 783.7,59.9 779.6,54.5 775.4,49.1 771.2,43.8" fill="#4b4b41" stroke="#4b4b41" stroke-width="0.6"/><polygon points="771.2,43.8 775.4,49.1 779.6,54.5 783.7,59.9 787.8,65.3 791.8,70.7 795.7,76.1 799.6,81.5 803.4,86.8 807.1,92.2 810.8,97.6 814.5,103.0 818.1,108.4 821.6,113.8 825.1,119.2 828.5,124.5 831.9,129.9 835.2,135.3 838.5,140.7 841.7,146.1 844.9,151.5 848.1,156.8 851.2,162.2 854.2,167.6 857.3,173.0 860.3,178.4 863.2,183.8 866.1,189.2 869.0,194.5 871.9,199.9 874.7,205.3 877.5,210.7 880.2,216.1 883.0,221.5 885.7,226.9 888.3,232.2 891.0,237.6 893.6,243.0 896.3,248.4 898.8,253.8 901.4,259.2 904.0,264.6 906.5,269.9 909.0,275.3 911.6,280.7 914.1,286.1 916.5,291.5 919.0,296.9 921.5,302.3 924.0,307.6 926.4,313.0 928.9,318.4 931.3,323.8 933.8,329.2 936.2,334.6 938.7,340.0 941.1,345.3 943.6,350.7 946.0,356.1 948.5,361.5 951.0,366.9 953.4,372.3 955.9,377.7 958.4,383.0 960.9,388.4 963.5,393.8 966.0,399.2 968.6,404.6 971.1,410.0 973.7,415.4 976.4,420.7 979.0,426.1 981.6,431.5 984.3,436.9 987.0,442.3 989.8,447.7 992.5,453.1 995.3,458.4 998.1,463.8 1001.0,469.2 1003.9,474.6 1010.4,472.7 1007.5,467.3 1004.6,462.0 1001.8,456.6 998.9,451.2 996.1,445.8 993.4,440.5 990.6,435.1 987.9,429.7 985.2,424.3 982.5,419.0 979.8,413.6 977.2,408.2 974.6,402.8 972.0,397.5 969.4,392.1 966.8,386.7 964.2,381.3 961.7,376.0 959.1,370.6 956.6,365.2 954.1,359.9 951.5,354.5 949.0,349.1 946.5,343.7 944.0,338.4 941.5,333.0 939.0,327.6 936.5,322.2 934.0,316.9 931.4,311.5 928.9,306.1 926.4,300.7 923.9,295.4 921.3,290.0 918.8,284.6 916.2,279.2 913.6,273.9 911.0,268.5 908.4,263.1 905.8,257.7 903.2,252.4 900.5,247.0 897.8,241.6 895.1,236.2 892.4,230.9 889.7,225.5 886.9,220.1 884.1,214.8 881.3,209.4 878.4,204.0 875.5,198.6 872.6,193.3 869.7,187.9 866.7,182.5 863.7,177.1 860.6,171.8 857.5,166.4 854.4,161.0 851.2,155.6 848.0,150.3 844.8,144.9 841.5,139.5 838.1,134.1 834.7,128.8 831.3,123.4 827.8,118.0 824.3,112.6 820.7,107.3 817.0,101.9 813.3,96.5 809.6,91.1 805.8,85.8 801.9,80.4 798.0,75.0 794.0,69.7 790.0,64.3 785.9,58.9 781.7,53.5 777.5,48.2 773.2,42.8" fill="#5f5858" stroke="#5f5858" stroke-width="0.6"/><polygon points="773.2,42.8 777.5,48.2 781.7,53.5 785.9,58.9 790.0,64.3 794.0,69.7 798.0,75.0 801.9,80.4 805.8,85.8 809.6,91.1 813.3,96.5 817.0,101.9 820.7,107.3 824.3,112.6 827.8,118.0 831.3,123.4 834.7,128.8 838.1,134.1 841.5,139.5 844.8,144.9 848.0,150.3 851.2,155.6 854.4,161.0 857.5,166.4 860.6,171.8 863.7,177.1 866.7,182.5 869.7,187.9 872.6,193.3 875.5,198.6 878.4,204.0 881.3,209.4 884.1,214.8 886.9,220.1 889.7,225.5 892.4,230.9 895.1,236.2 897.8,241.6 900.5,247.0 903.2,252.4 905.8,257.7 908.4,263.1 911.0,268.5 913.6,273.9 916.2,279.2 918.8,284.6 921.3,290.0 923.9,295.4 926.4,300.7 928.9,306.1 931.4,311.5 934.0,316.9 936.5,322.2 939.0,327.6 941.5,333.0 944.0,338.4 946.5,343.7 949.0,349.1 951.5,354.5 954.1,359.9 956.6,365.2 959.1,370.6 961.7,376.0 964.2,381.3 966.8,386.7 969.4,392.1 972.0,397.5 974.6,402.8 977.2,408.2 979.8,413.6 982.5,419.0 985.2,424.3 987.9,429.7 990.6,435.1 993.4,440.5 996.1,445.8 998.9,451.2 1001.8,456.6 1004.6,462.0 1007.5,467.3 1010.4,472.7 1014.6,471.5 1011.6,466.2 1008.7,460.8 1005.8,455.4 1003.0,450.1 1000.1,444.7 997.3,439.3 994.6,434.0 991.8,428.6 989.1,423.2 986.4,417.8 983.7,412.5 981.0,407.1 978.4,401.7 975.7,396.4 973.1,391.0 970.5,385.6 967.9,380.3 965.3,374.9 962.7,369.5 960.1,364.2 957.6,358.8 955.0,353.4 952.5,348.1 949.9,342.7 947.4,337.3 944.8,332.0 942.3,326.6 939.7,321.2 937.2,315.9 934.6,310.5 932.1,305.1 929.5,299.8 926.9,294.4 924.3,289.0 921.7,283.7 919.1,278.3 916.5,272.9 913.9,267.6 911.2,262.2 908.6,256.8 905.9,251.5 903.2,246.1 900.5,240.7 897.7,235.4 895.0,230.0 892.2,224.6 889.4,219.3 886.5,213.9 883.7,208.5 880.8,203.2 877.8,197.8 874.9,192.4 871.9,187.1 868.9,181.7 865.8,176.3 862.7,171.0 859.6,165.6 856.4,160.2 853.2,154.9 850.0,149.5 846.7,144.1 843.3,138.8 840.0,133.4 836.5,128.0 833.1,122.7 829.5,117.3 826.0,111.9 822.3,106.6 818.7,101.2 814.9,95.8 811.1,90.5 807.3,85.1 803.4,79.7 799.5,74.4 795.4,69.0 791.4,63.6 787.2,58.3 783.0,52.9 778.8,47.5 774.4,42.2" fill="#0a0c0a" stroke="#0a0c0a" stroke-width="0.6"/><polygon points="774.4,42.2 778.8,47.5 783.0,52.9 787.2,58.3 791.4,63.6 795.4,69.0 799.5,74.4 803.4,79.7 807.3,85.1 811.1,90.5 814.9,95.8 818.7,101.2 822.3,106.6 826.0,111.9 829.5,117.3 833.1,122.7 836.5,128.0 840.0,133.4 843.3,138.8 846.7,144.1 850.0,149.5 853.2,154.9 856.4,160.2 859.6,165.6 862.7,171.0 865.8,176.3 868.9,181.7 871.9,187.1 874.9,192.4 877.8,197.8 880.8,203.2 883.7,208.5 886.5,213.9 889.4,219.3 892.2,224.6 895.0,230.0 897.7,235.4 900.5,240.7 903.2,246.1 905.9,251.5 908.6,256.8 911.2,262.2 913.9,267.6 916.5,272.9 919.1,278.3 921.7,283.7 924.3,289.0 926.9,294.4 929.5,299.8 932.1,305.1 934.6,310.5 937.2,315.9 939.7,321.2 942.3,326.6 944.8,332.0 947.4,337.3 949.9,342.7 952.5,348.1 955.0,353.4 957.6,358.8 960.1,364.2 962.7,369.5 965.3,374.9 967.9,380.3 970.5,385.6 973.1,391.0 975.7,396.4 978.4,401.7 981.0,407.1 983.7,412.5 986.4,417.8 989.1,423.2 991.8,428.6 994.6,434.0 997.3,439.3 1000.1,444.7 1003.0,450.1 1005.8,455.4 1008.7,460.8 1011.6,466.2 1014.6,471.5 1026.2,468.2 1023.2,462.8 1020.3,457.5 1017.3,452.1 1014.4,446.8 1011.5,441.4 1008.6,436.1 1005.8,430.7 1002.9,425.4 1000.1,420.0 997.3,414.7 994.6,409.3 991.8,404.0 989.1,398.6 986.3,393.3 983.6,388.0 980.9,382.6 978.2,377.3 975.5,371.9 972.9,366.6 970.2,361.2 967.5,355.9 964.9,350.5 962.2,345.2 959.6,339.8 956.9,334.5 954.2,329.1 951.6,323.8 948.9,318.4 946.3,313.1 943.6,307.8 940.9,302.4 938.2,297.1 935.6,291.7 932.9,286.4 930.2,281.0 927.4,275.7 924.7,270.3 922.0,265.0 919.2,259.6 916.4,254.3 913.6,248.9 910.8,243.6 908.0,238.3 905.1,232.9 902.2,227.6 899.3,222.2 896.4,216.9 893.4,211.5 890.4,206.2 887.4,200.8 884.4,195.5 881.3,190.1 878.2,184.8 875.1,179.4 871.9,174.1 868.7,168.7 865.5,163.4 862.2,158.1 858.9,152.7 855.5,147.4 852.1,142.0 848.6,136.7 845.2,131.3 841.6,126.0 838.0,120.6 834.4,115.3 830.7,109.9 827.0,104.6 823.2,99.2 819.4,93.9 815.5,88.5 811.6,83.2 807.6,77.9 803.6,72.5 799.4,67.2 795.3,61.8 791.1,56.5 786.8,51.1 782.4,45.8 778.0,40.4" fill="#1e2220" stroke="#1e2220" stroke-width="0.6"/><polygon points="778.0,40.4 782.4,45.8 786.8,51.1 791.1,56.5 795.3,61.8 799.4,67.2 803.6,72.5 807.6,77.9 811.6,83.2 815.5,88.5 819.4,93.9 823.2,99.2 827.0,104.6 830.7,109.9 834.4,115.3 838.0,120.6 841.6,126.0 845.2,131.3 848.6,136.7 852.1,142.0 855.5,147.4 858.9,152.7 862.2,158.1 865.5,163.4 868.7,168.7 871.9,174.1 875.1,179.4 878.2,184.8 881.3,190.1 884.4,195.5 887.4,200.8 890.4,206.2 893.4,211.5 896.4,216.9 899.3,222.2 902.2,227.6 905.1,232.9 908.0,238.3 910.8,243.6 913.6,248.9 916.4,254.3 919.2,259.6 922.0,265.0 924.7,270.3 927.4,275.7 930.2,281.0 932.9,286.4 935.6,291.7 938.2,297.1 940.9,302.4 943.6,307.8 946.3,313.1 948.9,318.4 951.6,323.8 954.2,329.1 956.9,334.5 959.6,339.8 962.2,345.2 964.9,350.5 967.5,355.9 970.2,361.2 972.9,366.6 975.5,371.9 978.2,377.3 980.9,382.6 983.6,388.0 986.3,393.3 989.1,398.6 991.8,404.0 994.6,409.3 997.3,414.7 1000.1,420.0 1002.9,425.4 1005.8,430.7 1008.6,436.1 1011.5,441.4 1014.4,446.8 1017.3,452.1 1020.3,457.5 1023.2,462.8 1026.2,468.2 1029.7,467.2 1026.7,461.8 1023.7,456.5 1020.7,451.1 1017.8,445.8 1014.8,440.5 1011.9,435.1 1009.1,429.8 1006.2,424.4 1003.4,419.1 1000.6,413.8 997.8,408.4 995.0,403.1 992.2,397.7 989.4,392.4 986.7,387.1 984.0,381.7 981.3,376.4 978.5,371.0 975.8,365.7 973.1,360.4 970.4,355.0 967.7,349.7 965.1,344.3 962.4,339.0 959.7,333.7 957.0,328.3 954.3,323.0 951.6,317.6 948.9,312.3 946.2,306.9 943.5,301.6 940.8,296.3 938.1,290.9 935.4,285.6 932.6,280.2 929.9,274.9 927.1,269.6 924.3,264.2 921.5,258.9 918.7,253.5 915.9,248.2 913.0,242.9 910.1,237.5 907.3,232.2 904.3,226.8 901.4,221.5 898.4,216.2 895.4,210.8 892.4,205.5 889.4,200.1 886.3,194.8 883.2,189.5 880.1,184.1 876.9,178.8 873.7,173.4 870.4,168.1 867.2,162.8 863.9,157.4 860.5,152.1 857.1,146.7 853.7,141.4 850.2,136.0 846.7,130.7 843.1,125.4 839.5,120.0 835.8,114.7 832.1,109.3 828.4,104.0 824.6,98.7 820.7,93.3 816.8,88.0 812.8,82.6 808.8,77.3 804.8,72.0 800.6,66.6 796.4,61.3 792.2,55.9 787.9,50.6 783.5,45.3 779.1,39.9" fill="#0a0a0a" stroke="#0a0a0a" stroke-width="0.6"/><polygon points="779.1,39.9 783.5,45.3 787.9,50.6 792.2,55.9 796.4,61.3 800.6,66.6 804.8,72.0 808.8,77.3 812.8,82.6 816.8,88.0 820.7,93.3 824.6,98.7 828.4,104.0 832.1,109.3 835.8,114.7 839.5,120.0 843.1,125.4 846.7,130.7 850.2,136.0 853.7,141.4 857.1,146.7 860.5,152.1 863.9,157.4 867.2,162.8 870.4,168.1 873.7,173.4 876.9,178.8 880.1,184.1 883.2,189.5 886.3,194.8 889.4,200.1 892.4,205.5 895.4,210.8 898.4,216.2 901.4,221.5 904.3,226.8 907.3,232.2 910.1,237.5 913.0,242.9 915.9,248.2 918.7,253.5 921.5,258.9 924.3,264.2 927.1,269.6 929.9,274.9 932.6,280.2 935.4,285.6 938.1,290.9 940.8,296.3 943.5,301.6 946.2,306.9 948.9,312.3 951.6,317.6 954.3,323.0 957.0,328.3 959.7,333.7 962.4,339.0 965.1,344.3 967.7,349.7 970.4,355.0 973.1,360.4 975.8,365.7 978.5,371.0 981.3,376.4 984.0,381.7 986.7,387.1 989.4,392.4 992.2,397.7 995.0,403.1 997.8,408.4 1000.6,413.8 1003.4,419.1 1006.2,424.4 1009.1,429.8 1011.9,435.1 1014.8,440.5 1017.8,445.8 1020.7,451.1 1023.7,456.5 1026.7,461.8 1029.7,467.2 1036.6,465.2 1033.6,459.8 1030.5,454.5 1027.5,449.2 1024.5,443.9 1021.6,438.5 1018.6,433.2 1015.7,427.9 1012.8,422.5 1009.9,417.2 1007.1,411.9 1004.2,406.6 1001.4,401.2 998.6,395.9 995.8,390.6 993.0,385.2 990.2,379.9 987.4,374.6 984.6,369.3 981.9,363.9 979.1,358.6 976.4,353.3 973.6,347.9 970.9,342.6 968.1,337.3 965.4,332.0 962.6,326.6 959.9,321.3 957.1,316.0 954.3,310.6 951.6,305.3 948.8,300.0 946.0,294.7 943.2,289.3 940.4,284.0 937.6,278.7 934.8,273.3 932.0,268.0 929.1,262.7 926.2,257.4 923.4,252.0 920.5,246.7 917.5,241.4 914.6,236.0 911.6,230.7 908.7,225.4 905.6,220.1 902.6,214.7 899.5,209.4 896.5,204.1 893.3,198.7 890.2,193.4 887.0,188.1 883.8,182.8 880.6,177.4 877.3,172.1 874.0,166.8 870.7,161.4 867.3,156.1 863.9,150.8 860.4,145.5 856.9,140.1 853.4,134.8 849.8,129.5 846.1,124.1 842.5,118.8 838.7,113.5 835.0,108.2 831.2,102.8 827.3,97.5 823.4,92.2 819.4,86.8 815.4,81.5 811.3,76.2 807.2,70.9 803.0,65.5 798.8,60.2 794.5,54.9 790.1,49.5 785.7,44.2 781.2,38.9" fill="#231e20" stroke="#231e20" stroke-width="0.6"/><polygon points="781.2,38.9 785.7,44.2 790.1,49.5 794.5,54.9 798.8,60.2 803.0,65.5 807.2,70.9 811.3,76.2 815.4,81.5 819.4,86.8 823.4,92.2 827.3,97.5 831.2,102.8 835.0,108.2 838.7,113.5 842.5,118.8 846.1,124.1 849.8,129.5 853.4,134.8 856.9,140.1 860.4,145.5 863.9,150.8 867.3,156.1 870.7,161.4 874.0,166.8 877.3,172.1 880.6,177.4 883.8,182.8 887.0,188.1 890.2,193.4 893.3,198.7 896.5,204.1 899.5,209.4 902.6,214.7 905.6,220.1 908.7,225.4 911.6,230.7 914.6,236.0 917.5,241.4 920.5,246.7 923.4,252.0 926.2,257.4 929.1,262.7 932.0,268.0 934.8,273.3 937.6,278.7 940.4,284.0 943.2,289.3 946.0,294.7 948.8,300.0 951.6,305.3 954.3,310.6 957.1,316.0 959.9,321.3 962.6,326.6 965.4,332.0 968.1,337.3 970.9,342.6 973.6,347.9 976.4,353.3 979.1,358.6 981.9,363.9 984.6,369.3 987.4,374.6 990.2,379.9 993.0,385.2 995.8,390.6 998.6,395.9 1001.4,401.2 1004.2,406.6 1007.1,411.9 1009.9,417.2 1012.8,422.5 1015.7,427.9 1018.6,433.2 1021.6,438.5 1024.5,443.9 1027.5,449.2 1030.5,454.5 1033.6,459.8 1036.6,465.2 1042.7,463.4 1039.6,458.1 1036.5,452.8 1033.5,447.5 1030.5,442.2 1027.5,436.8 1024.5,431.5 1021.5,426.2 1018.6,420.9 1015.7,415.6 1012.8,410.2 1009.9,404.9 1007.0,399.6 1004.1,394.3 1001.3,389.0 998.4,383.7 995.6,378.3 992.7,373.0 989.9,367.7 987.1,362.4 984.3,357.1 981.5,351.7 978.7,346.4 975.9,341.1 973.1,335.8 970.3,330.5 967.5,325.2 964.7,319.8 961.9,314.5 959.0,309.2 956.2,303.9 953.4,298.6 950.6,293.2 947.7,287.9 944.8,282.6 942.0,277.3 939.1,272.0 936.2,266.7 933.3,261.3 930.4,256.0 927.4,250.7 924.5,245.4 921.5,240.1 918.5,234.7 915.4,229.4 912.4,224.1 909.3,218.8 906.2,213.5 903.1,208.2 900.0,202.8 896.8,197.5 893.6,192.2 890.4,186.9 887.1,181.6 883.8,176.3 880.5,170.9 877.1,165.6 873.7,160.3 870.2,155.0 866.8,149.7 863.3,144.3 859.7,139.0 856.1,133.7 852.5,128.4 848.8,123.1 845.0,117.8 841.3,112.4 837.4,107.1 833.6,101.8 829.7,96.5 825.7,91.2 821.7,85.8 817.6,80.5 813.5,75.2 809.3,69.9 805.1,64.6 800.8,59.3 796.4,53.9 792.0,48.6 787.6,43.3 783.0,38.0" fill="#0a0a0a" stroke="#0a0a0a" stroke-width="0.6"/><polygon points="783.0,38.0 787.6,43.3 792.0,48.6 796.4,53.9 800.8,59.3 805.1,64.6 809.3,69.9 813.5,75.2 817.6,80.5 821.7,85.8 825.7,91.2 829.7,96.5 833.6,101.8 837.4,107.1 841.3,112.4 845.0,117.8 848.8,123.1 852.5,128.4 856.1,133.7 859.7,139.0 863.3,144.3 866.8,149.7 870.2,155.0 873.7,160.3 877.1,165.6 880.5,170.9 883.8,176.3 887.1,181.6 890.4,186.9 893.6,192.2 896.8,197.5 900.0,202.8 903.1,208.2 906.2,213.5 909.3,218.8 912.4,224.1 915.4,229.4 918.5,234.7 921.5,240.1 924.5,245.4 927.4,250.7 930.4,256.0 933.3,261.3 936.2,266.7 939.1,272.0 942.0,277.3 944.8,282.6 947.7,287.9 950.6,293.2 953.4,298.6 956.2,303.9 959.0,309.2 961.9,314.5 964.7,319.8 967.5,325.2 970.3,330.5 973.1,335.8 975.9,341.1 978.7,346.4 981.5,351.7 984.3,357.1 987.1,362.4 989.9,367.7 992.7,373.0 995.6,378.3 998.4,383.7 1001.3,389.0 1004.1,394.3 1007.0,399.6 1009.9,404.9 1012.8,410.2 1015.7,415.6 1018.6,420.9 1021.5,426.2 1024.5,431.5 1027.5,436.8 1030.5,442.2 1033.5,447.5 1036.5,452.8 1039.6,458.1 1042.7,463.4 1052.2,460.7 1049.1,455.4 1046.0,450.1 1042.9,444.8 1039.8,439.5 1036.8,434.2 1033.7,428.9 1030.7,423.6 1027.7,418.3 1024.7,413.0 1021.7,407.7 1018.8,402.4 1015.8,397.1 1012.9,391.8 1010.0,386.5 1007.0,381.2 1004.1,375.8 1001.2,370.5 998.3,365.2 995.4,359.9 992.5,354.6 989.6,349.3 986.7,344.0 983.9,338.7 981.0,333.4 978.1,328.1 975.2,322.8 972.3,317.5 969.4,312.2 966.5,306.9 963.6,301.6 960.7,296.3 957.7,291.0 954.8,285.7 951.8,280.4 948.9,275.1 945.9,269.8 942.9,264.5 939.9,259.2 936.9,253.9 933.8,248.6 930.8,243.3 927.7,238.0 924.6,232.7 921.5,227.4 918.3,222.1 915.2,216.8 912.0,211.5 908.8,206.2 905.5,200.9 902.2,195.6 898.9,190.3 895.6,185.0 892.3,179.7 888.9,174.4 885.4,169.1 882.0,163.8 878.5,158.5 874.9,153.2 871.4,147.9 867.8,142.6 864.1,137.3 860.4,132.0 856.7,126.7 852.9,121.4 849.1,116.1 845.3,110.8 841.4,105.5 837.4,100.2 833.4,94.9 829.4,89.6 825.3,84.3 821.1,79.0 816.9,73.7 812.7,68.4 808.4,63.1 804.0,57.8 799.6,52.5 795.1,47.2 790.6,41.9 786.0,36.6" fill="#20262a" stroke="#20262a" stroke-width="0.6"/><polygon points="786.0,36.6 790.6,41.9 795.1,47.2 799.6,52.5 804.0,57.8 808.4,63.1 812.7,68.4 816.9,73.7 821.1,79.0 825.3,84.3 829.4,89.6 833.4,94.9 837.4,100.2 841.4,105.5 845.3,110.8 849.1,116.1 852.9,121.4 856.7,126.7 860.4,132.0 864.1,137.3 867.8,142.6 871.4,147.9 874.9,153.2 878.5,158.5 882.0,163.8 885.4,169.1 888.9,174.4 892.3,179.7 895.6,185.0 898.9,190.3 902.2,195.6 905.5,200.9 908.8,206.2 912.0,211.5 915.2,216.8 918.3,222.1 921.5,227.4 924.6,232.7 927.7,238.0 930.8,243.3 933.8,248.6 936.9,253.9 939.9,259.2 942.9,264.5 945.9,269.8 948.9,275.1 951.8,280.4 954.8,285.7 957.7,291.0 960.7,296.3 963.6,301.6 966.5,306.9 969.4,312.2 972.3,317.5 975.2,322.8 978.1,328.1 981.0,333.4 983.9,338.7 986.7,344.0 989.6,349.3 992.5,354.6 995.4,359.9 998.3,365.2 1001.2,370.5 1004.1,375.8 1007.0,381.2 1010.0,386.5 1012.9,391.8 1015.8,397.1 1018.8,402.4 1021.7,407.7 1024.7,413.0 1027.7,418.3 1030.7,423.6 1033.7,428.9 1036.8,434.2 1039.8,439.5 1042.9,444.8 1046.0,450.1 1049.1,455.4 1052.2,460.7 1062.7,457.7 1059.5,452.4 1056.4,447.1 1053.2,441.8 1050.1,436.5 1046.9,431.2 1043.8,426.0 1040.8,420.7 1037.7,415.4 1034.6,410.1 1031.6,404.8 1028.5,399.5 1025.5,394.3 1022.5,389.0 1019.5,383.7 1016.5,378.4 1013.5,373.1 1010.5,367.8 1007.5,362.6 1004.5,357.3 1001.5,352.0 998.6,346.7 995.6,341.4 992.6,336.1 989.6,330.9 986.6,325.6 983.6,320.3 980.6,315.0 977.6,309.7 974.6,304.4 971.6,299.2 968.6,293.9 965.6,288.6 962.5,283.3 959.5,278.0 956.4,272.7 953.3,267.5 950.2,262.2 947.1,256.9 944.0,251.6 940.9,246.3 937.7,241.0 934.5,235.8 931.3,230.5 928.1,225.2 924.8,219.9 921.6,214.6 918.3,209.3 914.9,204.1 911.6,198.8 908.2,193.5 904.8,188.2 901.4,182.9 897.9,177.6 894.4,172.4 890.9,167.1 887.3,161.8 883.7,156.5 880.1,151.2 876.4,145.9 872.7,140.7 869.0,135.4 865.2,130.1 861.4,124.8 857.5,119.5 853.6,114.2 849.6,109.0 845.6,103.7 841.6,98.4 837.5,93.1 833.4,87.8 829.2,82.5 825.0,77.3 820.7,72.0 816.3,66.7 811.9,61.4 807.5,56.1 803.0,50.8 798.5,45.6 793.8,40.3 789.2,35.0" fill="#050805" stroke="#050805" stroke-width="0.6"/><polygon points="789.2,35.0 793.8,40.3 798.5,45.6 803.0,50.8 807.5,56.1 811.9,61.4 816.3,66.7 820.7,72.0 825.0,77.3 829.2,82.5 833.4,87.8 837.5,93.1 841.6,98.4 845.6,103.7 849.6,109.0 853.6,114.2 857.5,119.5 861.4,124.8 865.2,130.1 869.0,135.4 872.7,140.7 876.4,145.9 880.1,151.2 883.7,156.5 887.3,161.8 890.9,167.1 894.4,172.4 897.9,177.6 901.4,182.9 904.8,188.2 908.2,193.5 911.6,198.8 914.9,204.1 918.3,209.3 921.6,214.6 924.8,219.9 928.1,225.2 931.3,230.5 934.5,235.8 937.7,241.0 940.9,246.3 944.0,251.6 947.1,256.9 950.2,262.2 953.3,267.5 956.4,272.7 959.5,278.0 962.5,283.3 965.6,288.6 968.6,293.9 971.6,299.2 974.6,304.4 977.6,309.7 980.6,315.0 983.6,320.3 986.6,325.6 989.6,330.9 992.6,336.1 995.6,341.4 998.6,346.7 1001.5,352.0 1004.5,357.3 1007.5,362.6 1010.5,367.8 1013.5,373.1 1016.5,378.4 1019.5,383.7 1022.5,389.0 1025.5,394.3 1028.5,399.5 1031.6,404.8 1034.6,410.1 1037.7,415.4 1040.8,420.7 1043.8,426.0 1046.9,431.2 1050.1,436.5 1053.2,441.8 1056.4,447.1 1059.5,452.4 1062.7,457.7 1080.1,452.7 1076.8,447.4 1073.5,442.2 1070.3,436.9 1067.0,431.7 1063.8,426.4 1060.6,421.1 1057.4,415.9 1054.2,410.6 1051.0,405.4 1047.8,400.1 1044.7,394.9 1041.5,389.6 1038.4,384.4 1035.2,379.1 1032.1,373.9 1028.9,368.6 1025.8,363.4 1022.7,358.1 1019.6,352.9 1016.4,347.6 1013.3,342.4 1010.2,337.1 1007.0,331.8 1003.9,326.6 1000.8,321.3 997.6,316.1 994.4,310.8 991.3,305.6 988.1,300.3 984.9,295.1 981.8,289.8 978.6,284.6 975.3,279.3 972.1,274.1 968.9,268.8 965.6,263.6 962.4,258.3 959.1,253.0 955.8,247.8 952.5,242.5 949.1,237.3 945.8,232.0 942.4,226.8 939.0,221.5 935.6,216.3 932.1,211.0 928.7,205.8 925.2,200.5 921.6,195.3 918.1,190.0 914.5,184.8 910.9,179.5 907.3,174.3 903.6,169.0 899.9,163.7 896.2,158.5 892.4,153.2 888.6,148.0 884.8,142.7 880.9,137.5 877.0,132.2 873.1,127.0 869.1,121.7 865.1,116.5 861.0,111.2 856.9,106.0 852.7,100.7 848.5,95.5 844.3,90.2 840.0,84.9 835.7,79.7 831.3,74.4 826.9,69.2 822.4,63.9 817.9,58.7 813.3,53.4 808.7,48.2 804.0,42.9 799.3,37.7 794.5,32.4" fill="#262626" stroke="#262626" stroke-width="0.6"/><polygon points="794.5,32.4 799.3,37.7 804.0,42.9 808.7,48.2 813.3,53.4 817.9,58.7 822.4,63.9 826.9,69.2 831.3,74.4 835.7,79.7 840.0,84.9 844.3,90.2 848.5,95.5 852.7,100.7 856.9,106.0 861.0,111.2 865.1,116.5 869.1,121.7 873.1,127.0 877.0,132.2 880.9,137.5 884.8,142.7 888.6,148.0 892.4,153.2 896.2,158.5 899.9,163.7 903.6,169.0 907.3,174.3 910.9,179.5 914.5,184.8 918.1,190.0 921.6,195.3 925.2,200.5 928.7,205.8 932.1,211.0 935.6,216.3 939.0,221.5 942.4,226.8 945.8,232.0 949.1,237.3 952.5,242.5 955.8,247.8 959.1,253.0 962.4,258.3 965.6,263.6 968.9,268.8 972.1,274.1 975.3,279.3 978.6,284.6 981.8,289.8 984.9,295.1 988.1,300.3 991.3,305.6 994.4,310.8 997.6,316.1 1000.8,321.3 1003.9,326.6 1007.0,331.8 1010.2,337.1 1013.3,342.4 1016.4,347.6 1019.6,352.9 1022.7,358.1 1025.8,363.4 1028.9,368.6 1032.1,373.9 1035.2,379.1 1038.4,384.4 1041.5,389.6 1044.7,394.9 1047.8,400.1 1051.0,405.4 1054.2,410.6 1057.4,415.9 1060.6,421.1 1063.8,426.4 1067.0,431.7 1070.3,436.9 1073.5,442.2 1076.8,447.4 1080.1,452.7 1096.3,448.0 1092.9,442.8 1089.6,437.5 1086.2,432.3 1082.9,427.1 1079.5,421.9 1076.2,416.7 1072.9,411.4 1069.6,406.2 1066.3,401.0 1063.1,395.8 1059.8,390.5 1056.5,385.3 1053.2,380.1 1050.0,374.8 1046.7,369.6 1043.4,364.4 1040.2,359.2 1036.9,354.0 1033.6,348.7 1030.4,343.5 1027.1,338.3 1023.8,333.0 1020.5,327.8 1017.3,322.6 1014.0,317.4 1010.7,312.2 1007.4,306.9 1004.1,301.7 1000.7,296.5 997.4,291.2 994.1,286.0 990.7,280.8 987.3,275.6 984.0,270.4 980.6,265.1 977.2,259.9 973.7,254.7 970.3,249.5 966.8,244.2 963.3,239.0 959.8,233.8 956.3,228.5 952.8,223.3 949.2,218.1 945.6,212.9 942.0,207.6 938.4,202.4 934.7,197.2 931.1,192.0 927.3,186.8 923.6,181.5 919.8,176.3 916.0,171.1 912.2,165.9 908.4,160.6 904.5,155.4 900.5,150.2 896.6,144.9 892.6,139.7 888.6,134.5 884.5,129.3 880.4,124.1 876.3,118.8 872.1,113.6 867.9,108.4 863.7,103.1 859.4,97.9 855.0,92.7 850.6,87.5 846.2,82.2 841.8,77.0 837.3,71.8 832.7,66.6 828.1,61.4 823.4,56.1 818.8,50.9 814.0,45.7 809.2,40.4 804.4,35.2 799.5,30.0" fill="#0c0c0c" stroke="#0c0c0c" stroke-width="0.6"/><polygon points="772.0,67.6 776.0,61.0 783.0,63.0 791.0,73.0 775.0,72.7" fill="#111"/><polygon points="768.6,45.5 768.3,39.8 776.9,33.8 787.0,30.0 799.5,29.8 804.0,35.0 799.0,33.0" fill="#131514"/><polygon points="994.0,475.0 1073.0,443.0 1096.0,449.0 1083.0,477.0 1074.0,500.0 1070.0,517.0 1068.0,523.0 1083.0,549.0 1087.0,568.0 1023.0,571.0 1002.0,525.0 1015.0,518.0 1019.0,519.0 1029.0,504.0 1008.0,496.0 999.0,487.0" fill="#0b0b0b"/><polygon points="994.0,475.0 1073.0,443.0 1096.0,449.0 1073.0,447.0 1003.0,474.0" fill="#1c1c1c"/><polygon points="1042.0,515.0 1048.7,506.0 1054.0,506.0 1053.0,515.8" fill="#c9c9c9"/><polygon points="1023.0,571.0 1034.0,556.0 1083.0,551.0 1087.0,568.0" fill="#161616"/><polygon points="1015.0,518.0 1068.0,523.0 1070.0,517.0 1029.0,504.0 1019.0,519.0" fill="#101010"/><circle cx="1062.5" cy="492.5" r="5.2" fill="#444"/><circle cx="1061.5" cy="491.5" r="3.2" fill="#575757"/><circle cx="1049.7" cy="541.4" r="5.2" fill="#3e3e3e"/><circle cx="1048.7" cy="540.4" r="3.2" fill="#4e4e4e"/><rect x="793" y="245" width="10" height="10" fill="#a65890"/><path d="M788,240 L808,260 M808,240 L788,260" stroke="#902878" stroke-width="1"/><polygon points="32.7,519.6 45.6,538.3 39.3,538.3 39.3,550.4 51.7,550.4 51.7,544.2 70.6,556.7 51.7,569.2 51.7,563.3 26.8,563.3 26.8,538.3 20.2,538.3" fill="#d9d4c4" stroke="#d4aa58" stroke-width="1"/><path d="M14.299999999999997,521 V549.6" stroke="#20a020" stroke-width="1"/><path d="M14.299999999999997,549.6 L49,548.3" stroke="#4a70e0" stroke-width="1"/><path d="M14.299999999999997,549.6 L16.400000000000006,568.3" stroke="#e02020" stroke-width="1"/><path d="M8,506 L13,511 L18,506 M13,511 V516" stroke="#109010" stroke-width="1.8" fill="none"/><path d="M11,568 L20,578 M20,568 L11,578" stroke="#ff1010" stroke-width="1.6"/><path d="M52,544.5 H59.5 L52.5,553.3 H60" stroke="#4a70e0" stroke-width="1.4" fill="none"/></svg>
<div class="a" style="left:1488px;top:62px;width:432px;height:814px;background:#222224"></div>
<div class="a" style="left:1494px;top:62px;width:426px;height:29px;border-radius:3px 0 0 0;background:linear-gradient(#46536c,#3e4a60 15px,#262628 16px,#262628)"></div>
<div class="t" style="left:1498.00px;top:69.65px;font-size:14px;line-height:14px;color:#e6e6e6;transform:scaleX(0.9527);">Scene nodes browser</div>
<div class="a" style="left:1881px;top:67px;width:17px;height:17px;border:1px solid #0c0c0e;border-radius:3px;background:linear-gradient(#7a94c8,#4a6090 50%,#1e2330 51%,#272d3a);box-shadow:inset 0 0 0 1px #6f8cc0,0 1px 0 #7a7a7a"></div>
<svg class="a" style="left:1884px;top:70px;" width="11" height="11" viewBox="0 0 11 11"><path d="M3.0 8.5 V2 H8.0 V8.5" fill="none" stroke="#f0f0f0" stroke-width="1.4"/><path d="M1.0 8.5 H10.0 M5.5 8.5 V10.5" stroke="#f0f0f0" stroke-width="1.6"/></svg>
<div class="a" style="left:1900px;top:67px;width:17px;height:17px;border:1px solid #0c0c0e;border-radius:3px;background:linear-gradient(#7a94c8,#4a6090 50%,#1e2330 51%,#272d3a);box-shadow:inset 0 0 0 1px #6f8cc0,0 1px 0 #7a7a7a"></div>
<svg class="a" style="left:1903px;top:70px;" width="11" height="11" viewBox="0 0 11 11"><path d="M1.5 1.5 L9.5 9.5 M9.5 1.5 L1.5 9.5" stroke="#eee" stroke-width="1.8"/></svg>
<div class="a" style="left:1494px;top:91px;width:426px;height:27px;background:linear-gradient(#5a6d94,#4a5a7c 12px,#3a465e 13px,#333c50)"></div>
<div class="a" style="left:1502px;top:93px;width:74px;height:25px;border:1px solid #1d1f24;border-bottom:none;border-radius:3px 3px 0 0;background:linear-gradient(#4e5a74,#46516a 11px,#2c2f36 13px,#26282d);box-shadow:inset 1px 1px 0 #8090b0"></div>
<div class="t" style="left:1510.00px;top:99.95px;font-size:14px;line-height:14px;color:#e6e6e6;transform:scaleX(0.9683);">Hierarchy</div>
<div class="a" style="left:1576px;top:91px;width:72px;height:27px;border:1px solid #1d1f24;border-bottom:none;border-radius:3px 3px 0 0;background:linear-gradient(#7a8cb0,#65779c 11px,#515f7e 13px,#4c5a76);box-shadow:inset 1px 1px 0 #8090b0"></div>
<div class="t" style="left:1584.60px;top:98.95px;font-size:14px;line-height:14px;color:#e6e6e6;transform:scaleX(0.9718);">Structure</div>
<div class="a" style="left:1648px;top:93px;width:79px;height:25px;border:1px solid #1d1f24;border-bottom:none;border-radius:3px 3px 0 0;background:linear-gradient(#4e5a74,#46516a 11px,#2c2f36 13px,#26282d);box-shadow:inset 1px 1px 0 #8090b0"></div>
<div class="t" style="left:1656.00px;top:99.95px;font-size:14px;line-height:14px;color:#e6e6e6;transform:scaleX(0.9718);">Properties</div>
<div class="a" style="left:1500px;top:117px;width:414px;height:422px;border:1px solid #3c4658;background:linear-gradient(92.3deg,#3a4354 0px,#394253 86px,#29292a 88px,#272728)"></div>
<div class="a" style="left:1501px;top:118px;width:412px;height:8px;background:linear-gradient(#3e4a60,rgba(60,70,90,0))"></div>
<div class="a" style="left:1504px;top:125px;width:30px;height:24px;border:1px solid #0c0c0e;border-radius:3px;background:linear-gradient(#7d94c0,#586c96 11px,#2c2e36 11px,#1e1f24);box-shadow:inset 0 0 0 1px #7f9ccc,0 1px 0 #5a5a5a"></div>
<div class="t" style="left:1511.75px;top:131.75px;font-size:14px;line-height:14px;color:#e6e6e6;transform:scaleX(0.9300);">L0</div>
<div class="a" style="left:1537px;top:125px;width:30px;height:24px;border:1px solid #0c0c0e;border-radius:3px;background:linear-gradient(#7d94c0,#586c96 11px,#2c2e36 11px,#1e1f24);box-shadow:inset 0 0 0 1px #7f9ccc,0 1px 0 #5a5a5a"></div>
<div class="t" style="left:1544.75px;top:131.75px;font-size:14px;line-height:14px;color:#e6e6e6;transform:scaleX(0.9300);">L1</div>
<div class="a" style="left:1570px;top:125px;width:30px;height:24px;border:1px solid #0c0c0e;border-radius:3px;background:linear-gradient(#7d94c0,#586c96 11px,#2c2e36 11px,#1e1f24);box-shadow:inset 0 0 0 1px #7f9ccc,0 1px 0 #5a5a5a"></div>
<div class="t" style="left:1577.75px;top:131.75px;font-size:14px;line-height:14px;color:#e6e6e6;transform:scaleX(0.9300);">L2</div>
<div class="a" style="left:1603px;top:125px;width:30px;height:24px;border:1px solid #0c0c0e;border-radius:3px;background:linear-gradient(#7d94c0,#586c96 11px,#2c2e36 11px,#1e1f24);box-shadow:inset 0 0 0 1px #7f9ccc,0 1px 0 #5a5a5a"></div>
<div class="t" style="left:1610.75px;top:131.75px;font-size:14px;line-height:14px;color:#e6e6e6;transform:scaleX(0.9300);">L3</div>
<div class="a" style="left:1636px;top:125px;width:30px;height:24px;border:1px solid #0c0c0e;border-radius:3px;background:linear-gradient(#7d94c0,#586c96 11px,#2c2e36 11px,#1e1f24);box-shadow:inset 0 0 0 1px #7f9ccc,0 1px 0 #5a5a5a"></div>
<div class="t" style="left:1643.75px;top:131.75px;font-size:14px;line-height:14px;color:#e6e6e6;transform:scaleX(0.9300);">L4</div>
<div class="a" style="left:1669px;top:125px;width:41px;height:24px;border:1px solid #0c0c0e;border-radius:3px;background:linear-gradient(#7d94c0,#586c96 11px,#2c2e36 11px,#1e1f24);box-shadow:inset 0 0 0 1px #7f9ccc,0 1px 0 #5a5a5a"></div>
<div class="t" style="left:1676.11px;top:131.75px;font-size:14px;line-height:14px;color:#e6e6e6;transform:scaleX(0.9300);">COL</div>
<div class="a" style="left:1713px;top:125px;width:52px;height:24px;border:1px solid #0c0c0e;border-radius:3px;background:linear-gradient(#7d94c0,#586c96 11px,#2c2e36 11px,#1e1f24);box-shadow:inset 0 0 0 1px #7f9ccc,0 1px 0 #5a5a5a"></div>
<div class="t" style="left:1725.61px;top:131.75px;font-size:14px;line-height:14px;color:#e6e6e6;transform:scaleX(0.9300);">Dust</div>
<div class="a" style="left:1768px;top:125px;width:41px;height:24px;border:1px solid #0c0c0e;border-radius:3px;background:linear-gradient(#7d94c0,#586c96 11px,#2c2e36 11px,#1e1f24);box-shadow:inset 0 0 0 1px #7f9ccc,0 1px 0 #5a5a5a"></div>
<div class="t" style="left:1778.36px;top:131.75px;font-size:14px;line-height:14px;color:#e6e6e6;transform:scaleX(0.9300);">Dirt</div>
<div class="a" style="left:1812px;top:125px;width:63px;height:24px;border:1px solid #0c0c0e;border-radius:3px;background:linear-gradient(#7d94c0,#586c96 11px,#2c2e36 11px,#1e1f24);box-shadow:inset 0 0 0 1px #7f9ccc,0 1px 0 #5a5a5a"></div>
<div class="t" style="left:1821.41px;top:131.75px;font-size:14px;line-height:14px;color:#e6e6e6;transform:scaleX(0.9300);">Scratch</div>
<div class="a" style="left:1504px;top:151px;width:52px;height:24px;border:1px solid #0c0c0e;border-radius:3px;background:linear-gradient(#7d94c0,#586c96 11px,#2c2e36 11px,#1e1f24);box-shadow:inset 0 0 0 1px #7f9ccc,0 1px 0 #5a5a5a"></div>
<div class="t" style="left:1516.24px;top:157.95px;font-size:14px;line-height:14px;color:#e6e6e6;transform:scaleX(0.9300);">Burn</div>
<div class="a" style="left:1559px;top:151px;width:85px;height:24px;border:1px solid #0c0c0e;border-radius:3px;background:linear-gradient(#7d94c0,#586c96 11px,#2c2e36 11px,#1e1f24);box-shadow:inset 0 0 0 1px #7f9ccc,0 1px 0 #5a5a5a"></div>
<div class="a" style="left:1627px;top:155px;width:1px;height:17px;background:#15161a;border-right:1px solid #50607c"></div>
<svg class="a" style="left:1632px;top:160px;" width="9" height="5" viewBox="0 0 9 5"><path d="M0 0 H9 L4.5 4.5Z" fill="#e8e8e8"/></svg>
<div class="t" style="left:1568.40px;top:157.95px;font-size:14px;line-height:14px;color:#e6e6e6;transform:scaleX(0.9300);">Damage</div>
<div class="a" style="left:1647px;top:151px;width:85px;height:24px;border:1px solid #0c0c0e;border-radius:3px;background:linear-gradient(#7d94c0,#586c96 11px,#2c2e36 11px,#1e1f24);box-shadow:inset 0 0 0 1px #7f9ccc,0 1px 0 #5a5a5a"></div>
<div class="a" style="left:1716px;top:155px;width:1px;height:17px;background:#15161a;border-right:1px solid #50607c"></div>
<svg class="a" style="left:1721px;top:160px;" width="9" height="5" viewBox="0 0 9 5"><path d="M0 0 H9 L4.5 4.5Z" fill="#e8e8e8"/></svg>
<div class="t" style="left:1661.97px;top:157.95px;font-size:14px;line-height:14px;color:#e6e6e6;transform:scaleX(0.9300);">Motion</div>
<div class="a" style="left:1735px;top:151px;width:52px;height:24px;border:1px solid #0c0c0e;border-radius:3px;background:linear-gradient(#7d94c0,#586c96 11px,#2c2e36 11px,#1e1f24);box-shadow:inset 0 0 0 1px #7f9ccc,0 1px 0 #5a5a5a"></div>
<div class="t" style="left:1747.24px;top:157.95px;font-size:14px;line-height:14px;color:#e6e6e6;transform:scaleX(0.9300);">Burn</div>
<div class="a" style="left:1790px;top:151px;width:85px;height:24px;border:1px solid #0c0c0e;border-radius:3px;background:linear-gradient(#7d94c0,#586c96 11px,#2c2e36 11px,#1e1f24);box-shadow:inset 0 0 0 1px #7f9ccc,0 1px 0 #5a5a5a"></div>
<div class="a" style="left:1859px;top:155px;width:1px;height:17px;background:#15161a;border-right:1px solid #50607c"></div>
<svg class="a" style="left:1864px;top:160px;" width="9" height="5" viewBox="0 0 9 5"><path d="M0 0 H9 L4.5 4.5Z" fill="#e8e8e8"/></svg>
<div class="t" style="left:1799.90px;top:157.95px;font-size:14px;line-height:14px;color:#e6e6e6;transform:scaleX(0.9300);">Damage</div>
<div class="a" style="left:1508px;top:189px;width:137.29999999999995px;height:1px;background:linear-gradient(90deg,rgba(80,100,140,0.2),#50648c)"></div>
<div class="a" style="left:1771.5px;top:189px;width:130.5px;height:1px;background:linear-gradient(90deg,#50648c,rgba(80,100,140,0.15))"></div>
<div class="t" style="left:1647.30px;top:183.55px;font-size:14px;line-height:14px;color:#d8d8d8;transform:scaleX(0.9577);">Custom scene state:</div>
<div class="a" style="left:1508px;top:215px;width:133.29999999999995px;height:1px;background:linear-gradient(90deg,rgba(80,100,140,0.2),#50648c)"></div>
<div class="a" style="left:1777px;top:215px;width:125px;height:1px;background:linear-gradient(90deg,#50648c,rgba(80,100,140,0.15))"></div>
<div class="t" style="left:1643.30px;top:209.65px;font-size:14px;line-height:14px;color:#d8d8d8;transform:scaleX(0.9785);">Custom state actions:</div>
<div class="a" style="left:1504px;top:230px;width:85px;height:24px;border:1px solid #0c0c0e;border-radius:3px;background:linear-gradient(#7d94c0,#586c96 11px,#2c2e36 11px,#1e1f24);box-shadow:inset 0 0 0 1px #7f9ccc,0 1px 0 #5a5a5a"></div>
<div class="t" style="left:1515.40px;top:235.55px;font-size:14px;line-height:14px;color:#e6e6e6;transform:scaleX(0.9536);">New State</div>
<div class="a" style="left:1592px;top:230px;width:96px;height:24px;border:1px solid #0c0c0e;border-radius:3px;background:linear-gradient(#56627c,#434e66 11px,#2c2e34 11px,#212226);box-shadow:inset 0 0 0 1px #4c5872,0 1px 0 #5a5a5a"></div>
<div class="t" style="left:1603.50px;top:235.55px;font-size:14px;line-height:14px;color:#15161a;transform:scaleX(0.9545);">Delete State</div>
<div class="a" style="left:1691px;top:230px;width:74px;height:24px;border:1px solid #0c0c0e;border-radius:3px;background:linear-gradient(#56627c,#434e66 11px,#2c2e34 11px,#212226);box-shadow:inset 0 0 0 1px #4c5872,0 1px 0 #5a5a5a"></div>
<div class="t" style="left:1699.70px;top:235.55px;font-size:14px;line-height:14px;color:#15161a;transform:scaleX(0.9407);">Edit State</div>
<div class="a" style="left:1508px;top:267px;width:121px;height:1px;background:linear-gradient(90deg,rgba(80,100,140,0.2),#50648c)"></div>
<div class="a" style="left:1789px;top:267px;width:113px;height:1px;background:linear-gradient(90deg,#50648c,rgba(80,100,140,0.15))"></div>
<div class="t" style="left:1631.00px;top:261.15px;font-size:14px;line-height:14px;color:#d8d8d8;transform:scaleX(0.9683);">Selection structure states:</div>
<div class="a" style="left:1504px;top:281px;width:403px;height:24px;border:1px solid #1a1c22;border-radius:2px;background:linear-gradient(#4e5a72,#3a4458 11px,#24262c 12px,#1e2024)"></div>
<div class="a" style="left:1505px;top:282px;width:21px;height:22px;border:1px solid #1a1c22;border-radius:2px;background:linear-gradient(#5a6680,#2a2e38)"></div>
<svg class="a" style="left:1508px;top:285px;" width="16" height="16" viewBox="0 0 16 16"><path d="M4 8 V5 Q4 1 8 1 Q11 1 11 4" fill="none" stroke="#c0a060" stroke-width="1.6"/><rect x="5" y="8" width="10" height="7" fill="#c0a050"/></svg>
<div class="t" style="left:1652.60px;top:286.65px;font-size:14px;line-height:14px;color:#0a0a0a;font-weight:bold;transform:scaleX(1.0256);">curved led light bar</div>
<div class="a" style="left:1504px;top:308px;width:195px;height:49px;border:1px solid #0c0c0e;border-radius:3px;background:linear-gradient(#7d94c0,#586c96 22px,#2c2e36 22px,#1e1f24);box-shadow:inset 0 0 0 1px #7f9ccc,0 1px 0 #5a5a5a"></div>
<svg class="a" style="left:1506px;top:312px;" width="42" height="42" viewBox="0 0 42 42"><path d="M6 13 L19 8.4 L36 12 L20.6 19Z" fill="#b8701a"/><path d="M20 21 V9 Q21 5 30 5 L33 4 L38 9 L31 12 L30 9 Q25 9 25 12 V20Z" fill="#40c030" stroke="#1a6a10" stroke-width="0.6"/><path d="M6 16 L20.6 22 L20.6 33.5 L6 27.7Z" fill="#f0b850"/><path d="M20.6 22 L36 16 L36 28 L20.6 33.5Z" fill="#d89838"/><path d="M1.9 14.7 L6 13 L20.6 19 L16 24Z" fill="#f8c868"/><path d="M39.9 15 L36 12 L20.6 19 L26 24Z" fill="#e8a848"/><rect x="9" y="26" width="3" height="2.5" fill="#ffe8a8"/><rect x="29" y="26" width="3" height="2.5" fill="#ffe8a8"/></svg>
<div class="t" style="left:1549.00px;top:326.45px;font-size:14px;line-height:14px;color:#ececec;transform:scaleX(1.0117);">Convert to Compound</div>
<div class="a" style="left:1702px;top:308px;width:106px;height:49px;border:1px solid #0c0c0e;border-radius:3px;background:linear-gradient(#56627c,#434e66 22px,#2c2e34 22px,#212226);box-shadow:inset 0 0 0 1px #4c5872,0 1px 0 #5a5a5a"></div>
<svg class="a" style="left:1705px;top:312px;" width="42" height="42" viewBox="0 0 42 42"><path d="M6 19 L19 14.4 L36 18 L20.6 25Z" fill="#6a4a20"/><path d="M6 22 L20.6 28 L20.6 39.5 L6 33.7Z" fill="#b08848"/><path d="M20.6 28 L36 22 L36 34 L20.6 39.5Z" fill="#967038"/><path d="M1.9 20.7 L6 19 L20.6 25 L16 30Z" fill="#c09858"/><path d="M39.9 21 L36 18 L20.6 25 L26 30Z" fill="#a88048"/><path d="M15 27 V15 H9 L21 3 L33 15 H27 V27Z" fill="#2a8a3a"/><path d="M21 3 L33 15 H27 V27 H21Z" fill="#1a6a28"/></svg>
<div class="t" style="left:1750.60px;top:326.45px;font-size:14px;line-height:14px;color:#15161a;transform:scaleX(0.9184);">Dismiss</div>
<div class="a" style="left:1812px;top:308px;width:41px;height:23px;border:1px solid #0c0c0e;border-radius:3px;background:linear-gradient(#56627c,#434e66 10px,#2c2e34 10px,#212226);box-shadow:inset 0 0 0 1px #4c5872,0 1px 0 #5a5a5a"></div>
<div class="t" style="left:1822.00px;top:312.95px;font-size:14px;line-height:14px;color:#15161a;transform:scaleX(0.9238);">Del</div>
<div class="a" style="left:1856px;top:308px;width:51px;height:23px;border:1px solid #0c0c0e;border-radius:3px;background:linear-gradient(#56627c,#434e66 10px,#2c2e34 10px,#212226);box-shadow:inset 0 0 0 1px #4c5872,0 1px 0 #5a5a5a"></div>
<div class="t" style="left:1868.60px;top:312.95px;font-size:14px;line-height:14px;color:#15161a;transform:scaleX(0.9091);">Lock</div>
<div class="a" style="left:1812px;top:334px;width:63px;height:23px;border:1px solid #0c0c0e;border-radius:3px;background:linear-gradient(#56627c,#434e66 10px,#2c2e34 10px,#212226);box-shadow:inset 0 0 0 1px #4c5872,0 1px 0 #5a5a5a"></div>
<div class="t" style="left:1824.30px;top:339.55px;font-size:14px;line-height:14px;color:#15161a;transform:scaleX(0.9794);">Group</div>
<div class="a" style="left:1504px;top:360px;width:74px;height:23px;border:1px solid #0c0c0e;border-radius:3px;background:linear-gradient(#56627c,#434e66 10px,#2c2e34 10px,#212226);box-shadow:inset 0 0 0 1px #4c5872,0 1px 0 #5a5a5a"></div>
<div class="t" style="left:1513.40px;top:365.65px;font-size:14px;line-height:14px;color:#15161a;transform:scaleX(1.0093);">Ungroup</div>
<div class="a" style="left:1581px;top:360px;width:96px;height:23px;border:1px solid #0c0c0e;border-radius:3px;background:linear-gradient(#56627c,#434e66 10px,#2c2e34 10px,#212226);box-shadow:inset 0 0 0 1px #4c5872,0 1px 0 #5a5a5a"></div>
<div class="t" style="left:1591.30px;top:365.65px;font-size:14px;line-height:14px;color:#15161a;transform:scaleX(1.0095);">Open group</div>
<div class="a" style="left:1680px;top:360px;width:96px;height:23px;border:1px solid #0c0c0e;border-radius:3px;background:linear-gradient(#56627c,#434e66 10px,#2c2e34 10px,#212226);box-shadow:inset 0 0 0 1px #4c5872,0 1px 0 #5a5a5a"></div>
<div class="t" style="left:1690.90px;top:365.65px;font-size:14px;line-height:14px;color:#15161a;transform:scaleX(0.9815);">Close group</div>
<div class="a" style="left:1506px;top:388px;width:402px;height:144px;border:1px solid #2a2a2c;background:linear-gradient(#e8e6e0,#e0ded8 19px,#c4c4c4 20px,#b8b8b8 60px,#9c9c9c)"></div>
<div class="a" style="left:1495px;top:545px;width:423px;height:9px;border:1px solid #3a4a66;border-radius:3px;background:linear-gradient(#23262d,#2a3038 3px,#4a5e84 4px,#2a3038 5px,#202227)"></div>
<div class="a" style="left:1495px;top:555px;width:425px;height:288px;background:linear-gradient(#cccccc,#c5c5c5 42px,#adadad 147px,#979797 288px)"></div>
<div class="a" style="left:1495px;top:556px;width:422px;height:23px;border-bottom:1px solid #8a7020;border-radius:0 0 2px 2px;background:linear-gradient(#f4e0a0,#f0d890 9px,#e8c040 10px,#d8b030)"></div>
<div class="a" style="left:1495px;top:556px;width:5px;height:23px;background:#c89820"></div>
<div class="a" style="left:1497px;top:561px;width:13px;height:13px;border:1px solid #444;background:#f8f8f8"></div>
<svg class="a" style="left:1497px;top:561px;" width="13" height="13" viewBox="0 0 13 13"><path d="M3 6.5 H10 M6.5 3 V10" stroke="#222" stroke-width="1.2"/></svg>
<div class="a" style="left:1515px;top:561px;width:12px;height:12px;border:1px solid #555;background:#f0f0f0"></div>
<div class="a" style="left:1517px;top:563px;width:8px;height:8px;background:#555"></div>
<div class="t" style="left:1532.00px;top:561.15px;font-size:14px;line-height:14px;color:#1a1a1a;transform:scaleX(1.0904);">curved led light bar</div>
<div class="a" style="left:1495px;top:843px;width:425px;height:33px;background:#1e1f22"></div>
<div class="a" style="left:1502px;top:844px;width:418px;height:29px;border-radius:3px;background:linear-gradient(#4a4b50,#3e3f44 14px,#333438 15px,#2c2d30);box-shadow:0 0 2px #111"></div>
<svg class="a" style="left:1506px;top:846px;" width="24" height="24" viewBox="0 0 24 24"><path d="M4 6 L14 2 L20 6 L20 18 L10 22 L4 18Z" fill="#2a70d0"/><path d="M4 6 L14 2 L20 6 L10 10Z" fill="#90c8ff"/><path d="M10 10 L20 6 V18 L10 22Z" fill="#1a50a0"/><rect x="14" y="16" width="8" height="6" fill="#e0f0ff"/><path d="M2 20 L12 23" stroke="#c06020" stroke-width="2"/></svg>
<div class="t" style="left:1534.30px;top:851.15px;font-size:14px;line-height:14px;color:#d8d8d8;transform:scaleX(0.9612);">Isolated</div>
<svg class="a" style="left:1592px;top:847px;" width="18" height="22" viewBox="0 0 18 18"><rect x="1" y="1" width="16" height="20" fill="#e8eef8" stroke="#6a7a98"/><rect x="13" y="1" width="4" height="20" fill="#9aaac0"/><rect x="3" y="3" width="8" height="6" fill="#fff" stroke="#333" stroke-width="0.8"/><rect x="3" y="12" width="8" height="6" fill="#fff" stroke="#333" stroke-width="0.8"/><path d="M5 5 l2 2 M5 14 l2 2" stroke="#2050c0"/></svg>
<div class="t" style="left:1617.20px;top:851.15px;font-size:14px;line-height:14px;color:#d8d8d8;transform:scaleX(0.9553);">Show All</div>
<svg class="a" style="left:1679px;top:847px;" width="18" height="22" viewBox="0 0 18 18"><rect x="1" y="1" width="16" height="20" fill="#e8eef8" stroke="#6a7a98"/><rect x="13" y="1" width="4" height="20" fill="#9aaac0"/><rect x="3" y="3" width="8" height="6" fill="#fff" stroke="#333" stroke-width="0.8"/><rect x="3" y="12" width="8" height="6" fill="#fff" stroke="#333" stroke-width="0.8"/></svg>
<div class="t" style="left:1704.60px;top:851.15px;font-size:14px;line-height:14px;color:#d8d8d8;transform:scaleX(0.9768);">Hide All</div>
<svg class="a" style="left:1761px;top:847px;" width="19" height="22" viewBox="0 0 19 19"><rect x="1" y="1" width="17" height="20" fill="#c8d0dc" stroke="#50607c"/><rect x="3" y="3" width="13" height="4" fill="#5a80b8"/><rect x="3" y="9" width="13" height="4" fill="#5a80b8"/><rect x="3" y="15" width="13" height="4" fill="#8a8a8a"/><path d="M9 4 V12 M5 8 H13" stroke="#e01010" stroke-width="3"/></svg>
<svg class="a" style="left:1790px;top:847px;" width="19" height="22" viewBox="0 0 19 19"><rect x="1" y="1" width="17" height="20" fill="#c8d0dc" stroke="#50607c"/><rect x="3" y="3" width="13" height="4" fill="#5a80b8"/><rect x="3" y="9" width="13" height="4" fill="#5a80b8"/><rect x="3" y="15" width="13" height="4" fill="#8a8a8a"/><path d="M9 10 V18 M5 14 H13" stroke="#e01010" stroke-width="3"/></svg>
<svg class="a" style="left:1819px;top:847px;" width="19" height="22" viewBox="0 0 19 19"><rect x="1" y="1" width="17" height="20" fill="#c8d0dc" stroke="#50607c"/><rect x="3" y="3" width="13" height="4" fill="#5a80b8"/><rect x="3" y="9" width="13" height="4" fill="#5a80b8"/><rect x="3" y="15" width="13" height="4" fill="#8a8a8a"/><path d="M12 3 V10 H5" stroke="#e01010" stroke-width="2.5" fill="none"/></svg>
<svg class="a" style="left:1847px;top:847px;" width="19" height="22" viewBox="0 0 19 19"><rect x="1" y="1" width="17" height="20" fill="#c8d0dc" stroke="#50607c"/><rect x="3" y="3" width="13" height="4" fill="#5a80b8"/><rect x="3" y="9" width="13" height="4" fill="#5a80b8"/><rect x="3" y="15" width="13" height="4" fill="#8a8a8a"/><rect x="0" y="0" width="8" height="8" fill="#111"/><path d="M4 1.5 V6.5 M1.5 4 H6.5" stroke="#fff" stroke-width="1.2"/></svg>
<svg class="a" style="left:1876px;top:847px;" width="19" height="22" viewBox="0 0 19 19"><rect x="1" y="1" width="17" height="20" fill="#c8d0dc" stroke="#50607c"/><rect x="3" y="3" width="13" height="4" fill="#5a80b8"/><rect x="3" y="9" width="13" height="4" fill="#5a80b8"/><rect x="3" y="15" width="13" height="4" fill="#8a8a8a"/><rect x="0" y="0" width="8" height="8" fill="#111"/><path d="M1.5 4 H6.5" stroke="#fff" stroke-width="1.2"/></svg>
<div class="a" style="left:61px;top:875px;width:1859px;height:130px;background:#202022"></div>
<div class="a" style="left:0px;top:909px;width:61px;height:96px;background:linear-gradient(#3a4252,#343c4c)"></div>
<div class="a" style="left:61px;top:876px;width:31px;height:129px;background:linear-gradient(90deg,#2a2f3a,#333a48);border-right:1px solid #1e2128"></div>
<div class="a" style="left:61px;top:876px;width:170px;height:6px;background:linear-gradient(90deg,#3a4456,rgba(58,68,86,0))"></div>
<div class="a" style="left:67px;top:882px;width:17px;height:17px;border:1px solid #0c0c0e;border-radius:3px;background:linear-gradient(#7a94c8,#4a6090 50%,#1e2330 51%,#272d3a);box-shadow:inset 0 0 0 1px #6f8cc0,0 1px 0 #7a7a7a"></div>
<svg class="a" style="left:70px;top:885px;" width="11" height="11" viewBox="0 0 11 11"><path d="M1.5 1.5 L9.5 9.5 M9.5 1.5 L1.5 9.5" stroke="#eee" stroke-width="1.8"/></svg>
<div class="a" style="left:67px;top:903px;width:17px;height:17px;border:1px solid #0c0c0e;border-radius:3px;background:linear-gradient(#7a94c8,#4a6090 50%,#1e2330 51%,#272d3a);box-shadow:inset 0 0 0 1px #6f8cc0,0 1px 0 #7a7a7a"></div>
<svg class="a" style="left:70px;top:906px;" width="11" height="11" viewBox="0 0 11 11"><path d="M3.0 8.5 V2 H8.0 V8.5" fill="none" stroke="#f0f0f0" stroke-width="1.4"/><path d="M1.0 8.5 H10.0 M5.5 8.5 V10.5" stroke="#f0f0f0" stroke-width="1.6"/></svg>
<div class="t" style="left:67px;top:921px;font-size:15px;line-height:15px;color:#f0f0f0;transform-origin:0 0;transform:translate(15px,0) rotate(90deg)">Messaging Bar</div>
<div class="a" style="left:61px;top:1004px;width:31px;height:1px;background:#202022"></div>
<div class="a" style="left:91px;top:881px;width:1827px;height:124px;background:linear-gradient(#cacaca 0,#bebebe 48px,#b4b4b4 60px,#989898 124px)"></div>
<div class="a" style="left:91px;top:881px;width:1827px;height:24px;border-bottom:1px solid #b8a878;background:linear-gradient(#f2ecd8,#ece2c0 10px,#e0d4a8 11px,#d8c898)"></div>
<div class="a" style="left:91px;top:906px;width:1827px;height:23px;border-bottom:1px solid #8a7020;background:linear-gradient(#f2e4b0,#eed898 10px,#e2bc50 11px,#d8ae38)"></div>
<svg class="a" style="left:108px;top:885px;" width="16" height="16" viewBox="0 0 16 16"><defs><radialGradient id="inf" cx="0.4" cy="0.3" r="0.8"><stop offset="0" stop-color="#80b0ff"/><stop offset="1" stop-color="#1a48c0"/></radialGradient></defs><circle cx="8" cy="8" r="7.5" fill="url(#inf)"/><rect x="7" y="6.5" width="2" height="6" fill="#fff"/><rect x="7" y="3.3" width="2" height="2" fill="#fff"/></svg>
<svg class="a" style="left:108px;top:909px;" width="16" height="16" viewBox="0 0 16 16"><defs><radialGradient id="inf" cx="0.4" cy="0.3" r="0.8"><stop offset="0" stop-color="#80b0ff"/><stop offset="1" stop-color="#1a48c0"/></radialGradient></defs><circle cx="8" cy="8" r="7.5" fill="url(#inf)"/><rect x="7" y="6.5" width="2" height="6" fill="#fff"/><rect x="7" y="3.3" width="2" height="2" fill="#fff"/></svg>
<div class="t" style="left:131.00px;top:887.35px;font-size:14px;line-height:14px;color:#1a1a1a;transform:scaleX(1.0644);">ZModeler is ready.</div>
<div class="t" style="left:131.00px;top:911.15px;font-size:14px;line-height:14px;color:#1a1a1a;transform:scaleX(1.0784);">Performing autosave to "c:\users\steph\onedrive\desktop\zmodeler 3/autosave.z3d"</div>
<div class="a" style="left:0px;top:1005px;width:1920px;height:25px;background:#161617"></div>
<div class="a" style="left:0px;top:1005px;width:97px;height:25px;background:#2e3646"></div>
<div class="a" style="left:1436px;top:1007px;width:81px;height:22px;border:1px solid #3a0a10;border-radius:2px;background:linear-gradient(#c83048,#a81830 50%,#901020)"></div>
<div class="t" style="left:1448.00px;top:1012.55px;font-size:14px;line-height:14px;color:#f4f4f4;font-weight:bold;transform:scaleX(0.9722);">Selected</div>
<div class="a" style="left:1521px;top:1007px;width:40px;height:22px;border:1px solid #3a2a08;border-radius:2px;background:linear-gradient(#f0c050,#d8a030 50%,#c08820)"></div>
<div class="t" style="left:1526.00px;top:1012.55px;font-size:14px;line-height:14px;color:#1a1a1a;font-weight:bold;transform:scaleX(0.9592);">Auto</div>
<div class="a" style="left:1566px;top:1007px;width:67px;height:22px;border:1px solid #1a2030;border-radius:2px;background:linear-gradient(#7088b8,#5870a0 50%,#4a6090)"></div>
<svg class="a" style="left:1569px;top:1007px;" width="22" height="22" viewBox="0 0 22 22"><defs><radialGradient id="rb" cx="0.35" cy="0.3" r="0.8"><stop offset="0" stop-color="#ff6060"/><stop offset="1" stop-color="#d00000"/></radialGradient></defs><ellipse cx="11" cy="11" rx="10" ry="10.5" fill="url(#rb)"/></svg>
<div class="t" style="left:1592.00px;top:1012.55px;font-size:14px;line-height:14px;color:#f4f4f4;font-weight:bold;transform:scaleX(0.9942);">Pivot</div>
<div class="a" style="left:1638px;top:1007px;width:25px;height:22px;border:1px solid #0a0a0c;border-radius:2px;background:linear-gradient(#3a4050,#22252c)"></div>
<svg class="a" style="left:1642px;top:1010px;" width="16" height="16" viewBox="0 0 16 16"><circle cx="8" cy="8" r="6.5" fill="#e8eef8" stroke="#2050c0" stroke-width="1.5"/><path d="M4.5 8 L7 10.5 L11.5 5" stroke="#2050c0" stroke-width="1.8" fill="none"/></svg>
<div class="t" style="left:1668.30px;top:1012.55px;font-size:14px;line-height:14px;color:#e8e8e8;transform:scaleX(0.9932);">Cursor: 3.07158, -0.86676, 0.76934</div>
<div class="a" style="left:0px;top:1030px;width:1920px;height:50px;background:linear-gradient(90deg,#e6d6d8 0px,#e4d6d6 960px,#e2dad6 990px,#dfdcd6 1040px,#dedcd6 1300px,#e0ddd6 1640px,#e2d8d4 1700px,#e0d4d4 1920px)"></div>
<svg class="a" style="left:20px;top:1045px;" width="20" height="20" viewBox="0 0 20 20"><path d="M0 2.8 L8.2 1.6 V9.4 H0Z M9.4 1.4 L20 0 V9.4 H9.4Z M0 10.6 H8.2 V18.4 L0 17.2Z M9.4 10.6 H20 V20 L9.4 18.6Z" fill="#111"/></svg>
<div class="a" style="left:61px;top:1030px;width:428px;height:50px;background:#fff;border:1px solid #d8d0d0;border-bottom:none"></div>
<svg class="a" style="left:75px;top:1044px;" width="22" height="22" viewBox="0 0 22 22"><circle cx="13" cy="9" r="7" fill="none" stroke="#222" stroke-width="1.5"/><path d="M8 14 L1.5 20.5" stroke="#222" stroke-width="1.8"/></svg>
<div class="t" style="left:109.80px;top:1046.32px;font-size:19px;line-height:19px;color:#1e1e1e;transform:scaleX(0.9762);">Type here to search</div>
<svg class="a" style="left:508px;top:1043px;" width="24" height="24" viewBox="0 0 24 24"><circle cx="12" cy="12" r="8.6" fill="none" stroke="#111" stroke-width="2.2"/></svg>
<svg class="a" style="left:569px;top:1044px;" width="24" height="22" viewBox="0 0 24 22"><path d="M1 1.5 H13 M1 19.5 H13" stroke="#111" stroke-width="1.3"/><rect x="2" y="5" width="10" height="11" fill="none" stroke="#111" stroke-width="1.4"/><path d="M2 1.5 V5 M12 1.5 V5 M2 16 V19.5 M12 16 V19.5" stroke="#111" stroke-width="1.2"/><path d="M19.5 0 V7 M19.5 11 V19.5" stroke="#111" stroke-width="1.3"/><rect x="18.3" y="7.5" width="2.4" height="2.6" fill="#111"/></svg>
<svg class="a" style="left:628px;top:1039px;" width="32" height="32" viewBox="0 0 32 32"><defs><linearGradient id="eg" x1="0" y1="0" x2="1" y2="1"><stop offset="0" stop-color="#50d070"/><stop offset="0.5" stop-color="#1a90d8"/><stop offset="1" stop-color="#0a50a0"/></linearGradient></defs><path d="M2 16 Q2 2 16 2 Q30 2 30 15 Q30 20 24 20 H12 Q13 26 20 27 Q25 27 28 25 V29 Q24 31 18 31 Q2 30 2 16Z" fill="url(#eg)"/><path d="M10 16 Q11 10 17 10 Q22 11 22 15 H12" fill="#e6d8d8" opacity="0.9"/></svg>
<svg class="a" style="left:690px;top:1040px;" width="32" height="28" viewBox="0 0 32 28"><path d="M1 4 H12 L15 7 H31 V26 H1Z" fill="#e8a820"/><path d="M1 10 H31 V26 H1Z" fill="#ffd050"/><rect x="8" y="17" width="16" height="9" fill="#2a7ad8"/></svg>
<svg class="a" style="left:751px;top:1039px;" width="32" height="32" viewBox="0 0 32 32"><path d="M2 8 H30 V29 Q30 31 28 31 H4 Q2 31 2 29Z" fill="#1a58a8"/><path d="M10 8 V5 Q10 2 16 2 Q22 2 22 5 V8" fill="none" stroke="#1a58a8" stroke-width="2"/><rect x="10" y="13" width="5" height="5" fill="#f25022"/><rect x="17" y="13" width="5" height="5" fill="#7fba00"/><rect x="10" y="20" width="5" height="5" fill="#00a4ef"/><rect x="17" y="20" width="5" height="5" fill="#ffb900"/></svg>
<svg class="a" style="left:814px;top:1040px;" width="32" height="30" viewBox="0 0 32 30"><path d="M1 9 L16 1 L31 9 V28 H1Z" fill="#1a68c8"/><path d="M4 6 H28 V16 L16 22 L4 16Z" fill="#f4f8ff"/><path d="M1 9 L16 18 L31 9 V28 H1Z" fill="#38b0f0"/><path d="M1 28 L16 18 L31 28Z" fill="#1e90e0"/></svg>
<svg class="a" style="left:876px;top:1039px;" width="32" height="32" viewBox="0 0 32 32"><rect x="1" y="1" width="30" height="30" rx="3" fill="#107c10"/><circle cx="16" cy="16" r="11.5" fill="#fff"/><path d="M7 7 Q16 13 25.5 25.5 Q22 28 16 21 Q10 28 6.5 25.5 Q16 13 25 7 Q20 9 16 12 Q12 9 7 7Z" fill="#107c10"/></svg>
<svg class="a" style="left:938px;top:1039px;" width="32" height="32" viewBox="0 0 32 32"><defs><linearGradient id="msg" x1="0" y1="1" x2="1" y2="0"><stop offset="0" stop-color="#6a30e0"/><stop offset="1" stop-color="#10a0f0"/></linearGradient></defs><rect x="1" y="1" width="30" height="30" fill="url(#msg)"/><path d="M5 26 L14 8 H18 L9 26Z M12 26 L21 8 H25 L16 26Z" fill="#e8e8ff"/><path d="M20 26 L25 14 L27 26Z" fill="#fff"/></svg>
<svg class="a" style="left:1000px;top:1039px;" width="30" height="32" viewBox="0 0 30 32"><path d="M4 6 L20 1 L27 4 V28 L20 31 L4 26 L20 28 V6 L10 9 V22 L4 26Z" fill="#e03a1a"/></svg>
<svg class="a" style="left:1062px;top:1039px;" width="32" height="32" viewBox="0 0 32 32"><circle cx="16" cy="16" r="15" fill="#2ec82e"/><circle cx="16" cy="16" r="2.5" fill="#111"/><path d="M11 11 Q8 16 11 21 M21 11 Q24 16 21 21 M8 8 Q3 16 8 24 M24 8 Q29 16 24 24" stroke="#111" stroke-width="1.8" fill="none"/></svg>
<svg class="a" style="left:1124px;top:1039px;" width="32" height="32" viewBox="0 0 32 32"><rect x="2" y="3" width="28" height="8" rx="1" fill="#c8205a"/><rect x="2" y="12" width="28" height="8" rx="1" fill="#3a40c0"/><rect x="2" y="21" width="28" height="8" rx="1" fill="#20a040"/><rect x="11" y="1" width="10" height="30" fill="#d08a30"/><rect x="12" y="14" width="8" height="6" fill="none" stroke="#fff" stroke-width="1.2"/></svg>
<svg class="a" style="left:1186px;top:1039px;" width="32" height="32" viewBox="0 0 32 32"><circle cx="16" cy="16" r="15" fill="#5865f2"/><path d="M8 11 Q12 8 16 9 Q20 8 24 11 Q26 16 25 21 Q22 23 20 23 L19 21 Q16 22 13 21 L12 23 Q10 23 7 21 Q6 16 8 11Z" fill="#fff"/><circle cx="12.5" cy="16.5" r="1.8" fill="#5865f2"/><circle cx="19.5" cy="16.5" r="1.8" fill="#5865f2"/></svg>
<div class="a" style="left:1234px;top:1030px;width:61px;height:50px;background:#f2eeec"></div>
<svg class="a" style="left:1248px;top:1039px;" width="32" height="32" viewBox="0 0 32 32"><defs><linearGradient id="zg2" x1="0" y1="0" x2="1" y2="1"><stop offset="0" stop-color="#ff3a3a"/><stop offset="0.55" stop-color="#d01515"/><stop offset="0.6" stop-color="#2a5fd0"/><stop offset="1" stop-color="#1a3a9a"/></linearGradient></defs><rect x="4" y="1" width="24" height="30" rx="3" fill="url(#zg2)" transform="skewX(-6)"/><path d="M9 7 H23 V10 L14 24 H23 V27 H8 V24 L17 10 H9 Z" fill="#fff"/></svg>
<div class="a" style="left:681px;top:1077px;width:51px;height:3px;background:#5aa6ee"></div>
<div class="a" style="left:1053px;top:1077px;width:50px;height:3px;background:#5aa6ee"></div>
<div class="a" style="left:1115px;top:1077px;width:50px;height:3px;background:#5aa6ee"></div>
<div class="a" style="left:1177px;top:1077px;width:50px;height:3px;background:#5aa6ee"></div>
<div class="a" style="left:1234px;top:1077px;width:61px;height:3px;background:#5aa0e0"></div>
<svg class="a" style="left:1470px;top:1044px;" width="28" height="20" viewBox="0 0 28 20"><defs><linearGradient id="cl" x1="0" y1="0" x2="0" y2="1"><stop offset="0" stop-color="#f0f8ff"/><stop offset="1" stop-color="#a8d0f0"/></linearGradient></defs><path d="M6 19 Q0 19 1 13 Q2 9 7 10 Q8 3 15 3 Q22 3 23 10 Q28 10 27 15 Q26 19 22 19Z" fill="url(#cl)" stroke="#90b8d8" stroke-width="0.6"/></svg>
<div class="t" style="left:1508.40px;top:1047.49px;font-size:17.5px;line-height:17.5px;color:#1a1a1a;transform:scaleX(0.9777);">-17°C</div>
<svg class="a" style="left:1573px;top:1048px;" width="18" height="11" viewBox="0 0 18 11"><path d="M1 10 L9 2 L17 10" fill="none" stroke="#222" stroke-width="1.5"/></svg>
<svg class="a" style="left:1604px;top:1045px;" width="18" height="18" viewBox="0 0 18 18"><rect x="2" y="4" width="10" height="10" rx="1" fill="none" stroke="#222" stroke-width="1.3"/><path d="M12 7 L16 5 V13 L12 11" fill="none" stroke="#222" stroke-width="1.3"/></svg>
<svg class="a" style="left:1631px;top:1046px;" width="22" height="14" viewBox="0 0 22 14"><rect x="2" y="4" width="16" height="8" fill="#222"/><rect x="18" y="6" width="2" height="4" fill="#222"/><path d="M4 1 V4 M7 1 V4" stroke="#222" stroke-width="1.2"/></svg>
<svg class="a" style="left:1664px;top:1044px;" width="20" height="18" viewBox="0 0 20 18"><path d="M2 17 Q2 3 18 2 M6 17 Q6 7 18 6 M10 17 Q10 11 18 10" fill="none" stroke="#222" stroke-width="1.3"/><circle cx="16" cy="15" r="1.5" fill="#222"/></svg>
<svg class="a" style="left:1691px;top:1045px;" width="22" height="18" viewBox="0 0 22 18"><path d="M2 6 H6 L11 2 V16 L6 12 H2Z" fill="none" stroke="#222" stroke-width="1.3"/><path d="M14 5 Q16 9 14 13 M17 3 Q20 9 17 15" fill="none" stroke="#222" stroke-width="1.3"/></svg>
<div class="t" style="left:1725.00px;top:1047.49px;font-size:17.5px;line-height:17.5px;color:#1a1a1a;transform:scaleX(0.7573);">ENG</div>
<div class="t" style="left:1778.90px;top:1036.10px;font-size:15px;line-height:15px;color:#1a1a1a;transform:scaleX(0.9319);">11:10 PM</div>
<div class="t" style="left:1770.70px;top:1059.10px;font-size:15px;line-height:15px;color:#1a1a1a;transform:scaleX(0.9791);">2022-01-07</div>
<svg class="a" style="left:1866px;top:1044px;" width="38" height="34" viewBox="0 0 38 34"><path d="M4 2 H26 V16 H10 L4 21Z" fill="#111"/><path d="M8 6 H22 M8 9 H22 M8 12 H22" stroke="#e6ddd8" stroke-width="1.3"/><circle cx="22" cy="21" r="10" fill="#e6ddd8" stroke="#555" stroke-width="1.2"/><text x="22" y="26" font-size="13" text-anchor="middle" fill="#111" font-family="Liberation Sans">15</text></svg>
<div class="a" style="left:1915px;top:1030px;width:1px;height:50px;background:#a09a98"></div>
</body></html>
